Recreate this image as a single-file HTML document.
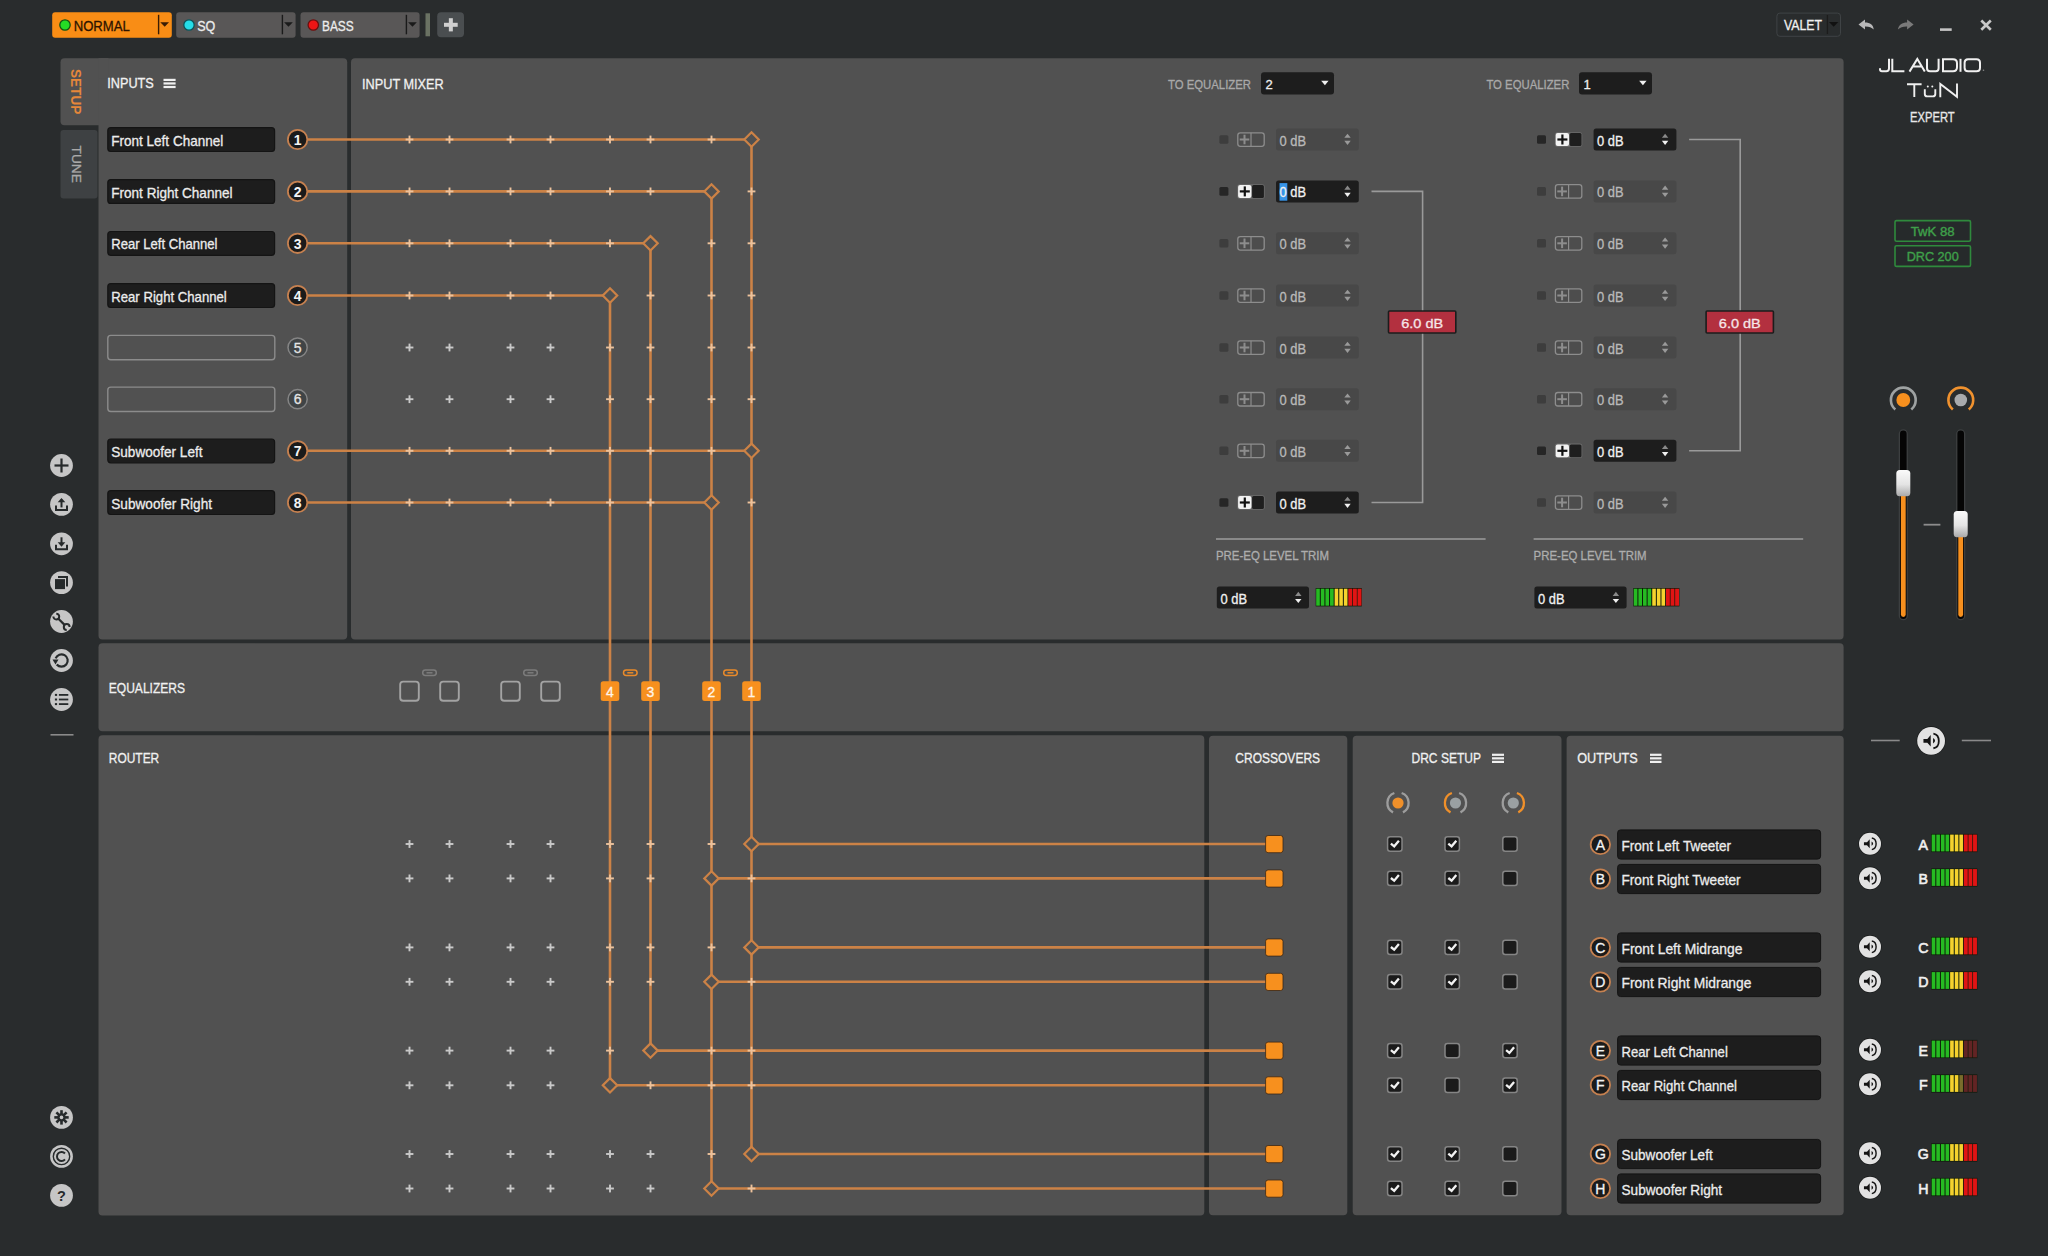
<!DOCTYPE html>
<html><head><meta charset="utf-8"><style>
html,body{margin:0;padding:0;background:#292c2d;overflow:hidden;width:2048px;height:1256px}
svg{display:block;font-family:"Liberation Sans", sans-serif}
</style></head><body>
<svg width="2048" height="1256" viewBox="0 0 2048 1256">
<rect x="0.00" y="0.00" width="2048.00" height="1256.00" fill="#292c2d"/>
<rect x="52.20" y="12.30" width="119.60" height="25.40" fill="#f98d15" rx="3"/>
<circle cx="65.00" cy="25.00" r="5.20" fill="#25dd25" stroke="#145214" stroke-width="1.3"/>
<text x="73.70" y="31.00" font-size="14.6" fill="#2e1400" stroke="#2e1400" stroke-width="0.3" textLength="56.10" lengthAdjust="spacingAndGlyphs">NORMAL</text>
<line x1="158.60" y1="14.80" x2="158.60" y2="34.30" stroke="#3a1d05" stroke-width="1.4"/>
<path d="M160.3,22.3 L169.0,22.3 L164.7,26.8 Z" fill="#3a1d05"/>
<rect x="176.20" y="12.30" width="119.40" height="25.40" fill="#595757" rx="3"/>
<circle cx="189.00" cy="25.00" r="5.20" fill="#25dde8" stroke="#0c5258" stroke-width="1.3"/>
<text x="197.20" y="31.00" font-size="14.6" fill="#ececec" stroke="#ececec" stroke-width="0.3" textLength="18.10" lengthAdjust="spacingAndGlyphs">SQ</text>
<line x1="282.40" y1="14.80" x2="282.40" y2="34.30" stroke="#1a1a1a" stroke-width="1.4"/>
<path d="M284.1,22.3 L292.8,22.3 L288.5,26.8 Z" fill="#1a1a1a"/>
<rect x="300.50" y="12.30" width="119.10" height="25.40" fill="#595757" rx="3"/>
<circle cx="313.30" cy="25.00" r="5.20" fill="#ee1515" stroke="#6a1010" stroke-width="1.3"/>
<text x="322.00" y="31.00" font-size="14.6" fill="#ececec" stroke="#ececec" stroke-width="0.3" textLength="31.70" lengthAdjust="spacingAndGlyphs">BASS</text>
<line x1="406.40" y1="14.80" x2="406.40" y2="34.30" stroke="#1a1a1a" stroke-width="1.4"/>
<path d="M408.1,22.3 L416.8,22.3 L412.5,26.8 Z" fill="#1a1a1a"/>
<rect x="425.50" y="13.30" width="4.50" height="23.00" fill="#6a7263"/>
<rect x="437.20" y="12.30" width="26.80" height="25.00" fill="#4a4e50" rx="4"/>
<rect x="444.00" y="22.80" width="13.70" height="4.00" fill="#d0d0d0"/>
<rect x="448.85" y="18.20" width="4.00" height="13.20" fill="#d0d0d0"/>
<rect x="1776.90" y="13.10" width="63.60" height="23.20" fill="none" rx="3" stroke="#3f4345" stroke-width="1"/>
<text x="1784.00" y="30.30" font-size="14" fill="#f0f0f0" stroke="#f0f0f0" stroke-width="0.3" textLength="38.00" lengthAdjust="spacingAndGlyphs">VALET</text>
<line x1="1827.40" y1="15.00" x2="1827.40" y2="34.00" stroke="#1c1c1c" stroke-width="1.3"/>
<path d="M1829,22 L1838.3,22 L1833.65,26.8 Z" fill="#111"/>
<path d="M1858.5,24.5 L1865,19.6 L1865,22.4 C1870,22.4 1873.5,24.5 1873.7,29.6 C1871.5,27.2 1869,26.3 1865,26.4 L1865,29.4 Z" fill="#b9b9b9"/>
<path d="M1913.6,24.5 L1907.1,19.6 L1907.1,22.4 C1902.1,22.4 1898.6,24.5 1897.9,29.6 C1900.1,27.2 1903.1,26.3 1907.1,26.4 L1907.1,29.4 Z" fill="#7a7a7a"/>
<rect x="1940.00" y="28.30" width="11.70" height="2.60" fill="#c4c4c4"/>
<line x1="1981.30" y1="20.50" x2="1990.80" y2="29.80" stroke="#c8c8c8" stroke-width="2.6"/>
<line x1="1990.80" y1="20.50" x2="1981.30" y2="29.80" stroke="#c8c8c8" stroke-width="2.6"/>
<path d="M1889,58.8 L1889,68.5 Q1889,71.2 1886.3,71.2 L1882,71.2 Q1880,71.2 1880,69.2 L1880,68.2" fill="none" stroke="#f0f0f0" stroke-width="2.0"/>
<path d="M1892.3,58.8 L1892.3,71.2 L1904.4,71.2" fill="none" stroke="#f0f0f0" stroke-width="2.0"/>
<path d="M1909.5,71.6 L1917.3,59 L1924.8,71.6 M1913.2,66.6 L1921.6,66.6" fill="none" stroke="#f0f0f0" stroke-width="2.0"/>
<path d="M1927,58.8 L1927,68.2 Q1927,71.2 1930,71.2 L1935.8,71.2 Q1938.6,71.2 1938.6,68.2 L1938.6,58.8" fill="none" stroke="#f0f0f0" stroke-width="2.0"/>
<path d="M1943,59.3 L1953,59.3 Q1957,59.3 1957,63.3 L1957,67.2 Q1957,71.2 1953,71.2 L1943,71.2 Z" fill="none" stroke="#f0f0f0" stroke-width="2.0"/>
<path d="M1960.5,58.8 L1960.5,71.8" fill="none" stroke="#f0f0f0" stroke-width="2.0"/>
<path d="M1968,59.3 L1976.5,59.3 Q1980,59.3 1980,62.8 L1980,67.7 Q1980,71.2 1976.5,71.2 L1968,71.2 Q1964.6,71.2 1964.6,67.7 L1964.6,62.8 Q1964.6,59.3 1968,59.3 Z" fill="none" stroke="#f0f0f0" stroke-width="2.0"/>
<circle cx="1983.50" cy="70.30" r="0.80" fill="#888"/>
<path d="M1907,84.2 L1921.6,84.2 M1914.3,84.2 L1914.3,97" fill="none" stroke="#f0f0f0" stroke-width="1.9"/>
<path d="M1924.8,89.3 L1924.8,94 Q1924.8,96.4 1927.2,96.4 L1932.8,96.4 Q1935.3,96.4 1935.3,94 L1935.3,89.3" fill="none" stroke="#f0f0f0" stroke-width="1.9"/>
<circle cx="1927.80" cy="86.60" r="1.00" fill="#f0f0f0"/>
<circle cx="1932.30" cy="86.60" r="1.00" fill="#f0f0f0"/>
<path d="M1940.3,97.2 L1940.3,84 L1957,96.8 L1957,83.6" fill="none" stroke="#f0f0f0" stroke-width="1.9"/>
<text x="1910.10" y="122.30" font-size="14.2" fill="#e8e8e8" stroke="#e8e8e8" stroke-width="0.3" textLength="44.60" lengthAdjust="spacingAndGlyphs">EXPERT</text>
<rect x="60.50" y="58.30" width="49.50" height="66.90" fill="#515151" rx="4"/>
<rect x="60.50" y="130.00" width="37.00" height="68.40" fill="#3e4143" rx="3"/>
<rect x="98.50" y="58.20" width="248.70" height="581.30" fill="#515151" rx="4"/>
<rect x="98.50" y="58.20" width="10.00" height="20.00" fill="#515151"/>
<rect x="351.00" y="58.20" width="1492.60" height="581.30" fill="#515151" rx="4"/>
<rect x="98.50" y="643.30" width="1745.10" height="87.90" fill="#515151" rx="4"/>
<rect x="98.50" y="735.20" width="1105.80" height="480.30" fill="#515151" rx="4"/>
<rect x="1209.00" y="735.80" width="138.30" height="479.50" fill="#515151" rx="4"/>
<rect x="1352.70" y="735.80" width="208.80" height="479.50" fill="#515151" rx="4"/>
<rect x="1566.60" y="735.80" width="277.10" height="479.50" fill="#515151" rx="4"/>
<text x="0" y="0" font-size="14.5" fill="#e5873a" font-weight="bold" textLength="45.3" lengthAdjust="spacingAndGlyphs" transform="translate(71.4,69) rotate(90)">SETUP</text>
<text x="0" y="0" font-size="13" fill="#a9a9a9" stroke="#a9a9a9" stroke-width="0.3" textLength="37.5" lengthAdjust="spacingAndGlyphs" transform="translate(72.3,145.5) rotate(90)">TUNE</text>
<text x="107.25" y="87.90" font-size="14.5" fill="#f2f2f2" stroke="#f2f2f2" stroke-width="0.3" textLength="46.50" lengthAdjust="spacingAndGlyphs">INPUTS</text>
<rect x="163.50" y="78.80" width="12.10" height="2.20" fill="#f0f0f0"/>
<rect x="163.50" y="82.35" width="12.10" height="2.20" fill="#f0f0f0"/>
<rect x="163.50" y="85.90" width="12.10" height="2.20" fill="#f0f0f0"/>
<rect x="107.80" y="127.70" width="166.80" height="23.80" fill="#1d1d1d" rx="3" stroke="#141414" stroke-width="1.2"/>
<text x="111.25" y="145.60" font-size="14.3" fill="#ececec" stroke="#ececec" stroke-width="0.3" textLength="112.00" lengthAdjust="spacingAndGlyphs">Front Left Channel</text>
<rect x="107.80" y="179.60" width="166.80" height="23.80" fill="#1d1d1d" rx="3" stroke="#141414" stroke-width="1.2"/>
<text x="111.25" y="197.50" font-size="14.3" fill="#ececec" stroke="#ececec" stroke-width="0.3" textLength="121.25" lengthAdjust="spacingAndGlyphs">Front Right Channel</text>
<rect x="107.80" y="231.50" width="166.80" height="23.80" fill="#1d1d1d" rx="3" stroke="#141414" stroke-width="1.2"/>
<text x="111.25" y="249.40" font-size="14.3" fill="#ececec" stroke="#ececec" stroke-width="0.3" textLength="106.25" lengthAdjust="spacingAndGlyphs">Rear Left Channel</text>
<rect x="107.80" y="283.70" width="166.80" height="23.80" fill="#1d1d1d" rx="3" stroke="#141414" stroke-width="1.2"/>
<text x="111.25" y="301.60" font-size="14.3" fill="#ececec" stroke="#ececec" stroke-width="0.3" textLength="115.50" lengthAdjust="spacingAndGlyphs">Rear Right Channel</text>
<rect x="107.80" y="335.40" width="167.00" height="24.40" fill="#515151" rx="3" stroke="#8c8c8c" stroke-width="1.4"/>
<rect x="107.80" y="387.10" width="167.00" height="24.40" fill="#515151" rx="3" stroke="#8c8c8c" stroke-width="1.4"/>
<rect x="107.80" y="439.00" width="166.80" height="23.80" fill="#1d1d1d" rx="3" stroke="#141414" stroke-width="1.2"/>
<text x="111.25" y="456.90" font-size="14.3" fill="#ececec" stroke="#ececec" stroke-width="0.3" textLength="91.25" lengthAdjust="spacingAndGlyphs">Subwoofer Left</text>
<rect x="107.80" y="490.70" width="166.80" height="23.80" fill="#1d1d1d" rx="3" stroke="#141414" stroke-width="1.2"/>
<text x="111.25" y="508.60" font-size="14.3" fill="#ececec" stroke="#ececec" stroke-width="0.3" textLength="100.75" lengthAdjust="spacingAndGlyphs">Subwoofer Right</text>
<line x1="751.50" y1="139.50" x2="751.50" y2="1154.00" stroke="#cc8246" stroke-width="2.6"/>
<line x1="711.50" y1="191.40" x2="711.50" y2="1188.50" stroke="#cc8246" stroke-width="2.6"/>
<line x1="650.50" y1="243.30" x2="650.50" y2="1050.60" stroke="#cc8246" stroke-width="2.6"/>
<line x1="610.00" y1="295.50" x2="610.00" y2="1085.30" stroke="#cc8246" stroke-width="2.6"/>
<line x1="308.00" y1="139.50" x2="751.50" y2="139.50" stroke="#cc8246" stroke-width="2.6"/>
<line x1="308.00" y1="191.40" x2="711.50" y2="191.40" stroke="#cc8246" stroke-width="2.6"/>
<line x1="308.00" y1="243.30" x2="650.50" y2="243.30" stroke="#cc8246" stroke-width="2.6"/>
<line x1="308.00" y1="295.50" x2="610.00" y2="295.50" stroke="#cc8246" stroke-width="2.6"/>
<line x1="308.00" y1="450.80" x2="751.50" y2="450.80" stroke="#cc8246" stroke-width="2.6"/>
<line x1="308.00" y1="502.50" x2="711.50" y2="502.50" stroke="#cc8246" stroke-width="2.6"/>
<line x1="751.50" y1="844.00" x2="1274.30" y2="844.00" stroke="#cc8246" stroke-width="2.6"/>
<line x1="711.50" y1="878.40" x2="1274.30" y2="878.40" stroke="#cc8246" stroke-width="2.6"/>
<line x1="751.50" y1="947.40" x2="1274.30" y2="947.40" stroke="#cc8246" stroke-width="2.6"/>
<line x1="711.50" y1="981.80" x2="1274.30" y2="981.80" stroke="#cc8246" stroke-width="2.6"/>
<line x1="650.50" y1="1050.60" x2="1274.30" y2="1050.60" stroke="#cc8246" stroke-width="2.6"/>
<line x1="610.00" y1="1085.30" x2="1274.30" y2="1085.30" stroke="#cc8246" stroke-width="2.6"/>
<line x1="751.50" y1="1154.00" x2="1274.30" y2="1154.00" stroke="#cc8246" stroke-width="2.6"/>
<line x1="711.50" y1="1188.50" x2="1274.30" y2="1188.50" stroke="#cc8246" stroke-width="2.6"/>
<rect x="405.60" y="138.55" width="7.80" height="1.90" fill="#ecc29c"/>
<rect x="408.55" y="135.60" width="1.90" height="7.80" fill="#ecc29c"/>
<rect x="445.60" y="138.55" width="7.80" height="1.90" fill="#ecc29c"/>
<rect x="448.55" y="135.60" width="1.90" height="7.80" fill="#ecc29c"/>
<rect x="506.60" y="138.55" width="7.80" height="1.90" fill="#ecc29c"/>
<rect x="509.55" y="135.60" width="1.90" height="7.80" fill="#ecc29c"/>
<rect x="546.60" y="138.55" width="7.80" height="1.90" fill="#ecc29c"/>
<rect x="549.55" y="135.60" width="1.90" height="7.80" fill="#ecc29c"/>
<rect x="606.10" y="138.55" width="7.80" height="1.90" fill="#ecc29c"/>
<rect x="609.05" y="135.60" width="1.90" height="7.80" fill="#ecc29c"/>
<rect x="646.60" y="138.55" width="7.80" height="1.90" fill="#ecc29c"/>
<rect x="649.55" y="135.60" width="1.90" height="7.80" fill="#ecc29c"/>
<rect x="707.60" y="138.55" width="7.80" height="1.90" fill="#ecc29c"/>
<rect x="710.55" y="135.60" width="1.90" height="7.80" fill="#ecc29c"/>
<path d="M751.5,132.3 L758.7,139.5 L751.5,146.7 L744.3,139.5 Z" fill="#515151" stroke="#cc8246" stroke-width="2.2"/>
<rect x="405.60" y="190.45" width="7.80" height="1.90" fill="#ecc29c"/>
<rect x="408.55" y="187.50" width="1.90" height="7.80" fill="#ecc29c"/>
<rect x="445.60" y="190.45" width="7.80" height="1.90" fill="#ecc29c"/>
<rect x="448.55" y="187.50" width="1.90" height="7.80" fill="#ecc29c"/>
<rect x="506.60" y="190.45" width="7.80" height="1.90" fill="#ecc29c"/>
<rect x="509.55" y="187.50" width="1.90" height="7.80" fill="#ecc29c"/>
<rect x="546.60" y="190.45" width="7.80" height="1.90" fill="#ecc29c"/>
<rect x="549.55" y="187.50" width="1.90" height="7.80" fill="#ecc29c"/>
<rect x="606.10" y="190.45" width="7.80" height="1.90" fill="#ecc29c"/>
<rect x="609.05" y="187.50" width="1.90" height="7.80" fill="#ecc29c"/>
<rect x="646.60" y="190.45" width="7.80" height="1.90" fill="#ecc29c"/>
<rect x="649.55" y="187.50" width="1.90" height="7.80" fill="#ecc29c"/>
<path d="M711.5,184.20000000000002 L718.7,191.4 L711.5,198.6 L704.3,191.4 Z" fill="#515151" stroke="#cc8246" stroke-width="2.2"/>
<rect x="747.60" y="190.45" width="7.80" height="1.90" fill="#ecc29c"/>
<rect x="750.55" y="187.50" width="1.90" height="7.80" fill="#ecc29c"/>
<rect x="405.60" y="242.35" width="7.80" height="1.90" fill="#ecc29c"/>
<rect x="408.55" y="239.40" width="1.90" height="7.80" fill="#ecc29c"/>
<rect x="445.60" y="242.35" width="7.80" height="1.90" fill="#ecc29c"/>
<rect x="448.55" y="239.40" width="1.90" height="7.80" fill="#ecc29c"/>
<rect x="506.60" y="242.35" width="7.80" height="1.90" fill="#ecc29c"/>
<rect x="509.55" y="239.40" width="1.90" height="7.80" fill="#ecc29c"/>
<rect x="546.60" y="242.35" width="7.80" height="1.90" fill="#ecc29c"/>
<rect x="549.55" y="239.40" width="1.90" height="7.80" fill="#ecc29c"/>
<rect x="606.10" y="242.35" width="7.80" height="1.90" fill="#ecc29c"/>
<rect x="609.05" y="239.40" width="1.90" height="7.80" fill="#ecc29c"/>
<path d="M650.5,236.10000000000002 L657.7,243.3 L650.5,250.5 L643.3,243.3 Z" fill="#515151" stroke="#cc8246" stroke-width="2.2"/>
<rect x="707.60" y="242.35" width="7.80" height="1.90" fill="#ecc29c"/>
<rect x="710.55" y="239.40" width="1.90" height="7.80" fill="#ecc29c"/>
<rect x="747.60" y="242.35" width="7.80" height="1.90" fill="#ecc29c"/>
<rect x="750.55" y="239.40" width="1.90" height="7.80" fill="#ecc29c"/>
<rect x="405.60" y="294.55" width="7.80" height="1.90" fill="#ecc29c"/>
<rect x="408.55" y="291.60" width="1.90" height="7.80" fill="#ecc29c"/>
<rect x="445.60" y="294.55" width="7.80" height="1.90" fill="#ecc29c"/>
<rect x="448.55" y="291.60" width="1.90" height="7.80" fill="#ecc29c"/>
<rect x="506.60" y="294.55" width="7.80" height="1.90" fill="#ecc29c"/>
<rect x="509.55" y="291.60" width="1.90" height="7.80" fill="#ecc29c"/>
<rect x="546.60" y="294.55" width="7.80" height="1.90" fill="#ecc29c"/>
<rect x="549.55" y="291.60" width="1.90" height="7.80" fill="#ecc29c"/>
<path d="M610,288.3 L617.2,295.5 L610,302.7 L602.8,295.5 Z" fill="#515151" stroke="#cc8246" stroke-width="2.2"/>
<rect x="646.60" y="294.55" width="7.80" height="1.90" fill="#ecc29c"/>
<rect x="649.55" y="291.60" width="1.90" height="7.80" fill="#ecc29c"/>
<rect x="707.60" y="294.55" width="7.80" height="1.90" fill="#ecc29c"/>
<rect x="710.55" y="291.60" width="1.90" height="7.80" fill="#ecc29c"/>
<rect x="747.60" y="294.55" width="7.80" height="1.90" fill="#ecc29c"/>
<rect x="750.55" y="291.60" width="1.90" height="7.80" fill="#ecc29c"/>
<rect x="405.60" y="346.55" width="7.80" height="1.90" fill="#c9c9c9"/>
<rect x="408.55" y="343.60" width="1.90" height="7.80" fill="#c9c9c9"/>
<rect x="445.60" y="346.55" width="7.80" height="1.90" fill="#c9c9c9"/>
<rect x="448.55" y="343.60" width="1.90" height="7.80" fill="#c9c9c9"/>
<rect x="506.60" y="346.55" width="7.80" height="1.90" fill="#c9c9c9"/>
<rect x="509.55" y="343.60" width="1.90" height="7.80" fill="#c9c9c9"/>
<rect x="546.60" y="346.55" width="7.80" height="1.90" fill="#c9c9c9"/>
<rect x="549.55" y="343.60" width="1.90" height="7.80" fill="#c9c9c9"/>
<rect x="606.10" y="346.55" width="7.80" height="1.90" fill="#ecc29c"/>
<rect x="609.05" y="343.60" width="1.90" height="7.80" fill="#ecc29c"/>
<rect x="646.60" y="346.55" width="7.80" height="1.90" fill="#ecc29c"/>
<rect x="649.55" y="343.60" width="1.90" height="7.80" fill="#ecc29c"/>
<rect x="707.60" y="346.55" width="7.80" height="1.90" fill="#ecc29c"/>
<rect x="710.55" y="343.60" width="1.90" height="7.80" fill="#ecc29c"/>
<rect x="747.60" y="346.55" width="7.80" height="1.90" fill="#ecc29c"/>
<rect x="750.55" y="343.60" width="1.90" height="7.80" fill="#ecc29c"/>
<rect x="405.60" y="398.25" width="7.80" height="1.90" fill="#c9c9c9"/>
<rect x="408.55" y="395.30" width="1.90" height="7.80" fill="#c9c9c9"/>
<rect x="445.60" y="398.25" width="7.80" height="1.90" fill="#c9c9c9"/>
<rect x="448.55" y="395.30" width="1.90" height="7.80" fill="#c9c9c9"/>
<rect x="506.60" y="398.25" width="7.80" height="1.90" fill="#c9c9c9"/>
<rect x="509.55" y="395.30" width="1.90" height="7.80" fill="#c9c9c9"/>
<rect x="546.60" y="398.25" width="7.80" height="1.90" fill="#c9c9c9"/>
<rect x="549.55" y="395.30" width="1.90" height="7.80" fill="#c9c9c9"/>
<rect x="606.10" y="398.25" width="7.80" height="1.90" fill="#ecc29c"/>
<rect x="609.05" y="395.30" width="1.90" height="7.80" fill="#ecc29c"/>
<rect x="646.60" y="398.25" width="7.80" height="1.90" fill="#ecc29c"/>
<rect x="649.55" y="395.30" width="1.90" height="7.80" fill="#ecc29c"/>
<rect x="707.60" y="398.25" width="7.80" height="1.90" fill="#ecc29c"/>
<rect x="710.55" y="395.30" width="1.90" height="7.80" fill="#ecc29c"/>
<rect x="747.60" y="398.25" width="7.80" height="1.90" fill="#ecc29c"/>
<rect x="750.55" y="395.30" width="1.90" height="7.80" fill="#ecc29c"/>
<rect x="405.60" y="449.85" width="7.80" height="1.90" fill="#ecc29c"/>
<rect x="408.55" y="446.90" width="1.90" height="7.80" fill="#ecc29c"/>
<rect x="445.60" y="449.85" width="7.80" height="1.90" fill="#ecc29c"/>
<rect x="448.55" y="446.90" width="1.90" height="7.80" fill="#ecc29c"/>
<rect x="506.60" y="449.85" width="7.80" height="1.90" fill="#ecc29c"/>
<rect x="509.55" y="446.90" width="1.90" height="7.80" fill="#ecc29c"/>
<rect x="546.60" y="449.85" width="7.80" height="1.90" fill="#ecc29c"/>
<rect x="549.55" y="446.90" width="1.90" height="7.80" fill="#ecc29c"/>
<rect x="606.10" y="449.85" width="7.80" height="1.90" fill="#ecc29c"/>
<rect x="609.05" y="446.90" width="1.90" height="7.80" fill="#ecc29c"/>
<rect x="646.60" y="449.85" width="7.80" height="1.90" fill="#ecc29c"/>
<rect x="649.55" y="446.90" width="1.90" height="7.80" fill="#ecc29c"/>
<rect x="707.60" y="449.85" width="7.80" height="1.90" fill="#ecc29c"/>
<rect x="710.55" y="446.90" width="1.90" height="7.80" fill="#ecc29c"/>
<path d="M751.5,443.6 L758.7,450.8 L751.5,458.0 L744.3,450.8 Z" fill="#515151" stroke="#cc8246" stroke-width="2.2"/>
<rect x="405.60" y="501.55" width="7.80" height="1.90" fill="#ecc29c"/>
<rect x="408.55" y="498.60" width="1.90" height="7.80" fill="#ecc29c"/>
<rect x="445.60" y="501.55" width="7.80" height="1.90" fill="#ecc29c"/>
<rect x="448.55" y="498.60" width="1.90" height="7.80" fill="#ecc29c"/>
<rect x="506.60" y="501.55" width="7.80" height="1.90" fill="#ecc29c"/>
<rect x="509.55" y="498.60" width="1.90" height="7.80" fill="#ecc29c"/>
<rect x="546.60" y="501.55" width="7.80" height="1.90" fill="#ecc29c"/>
<rect x="549.55" y="498.60" width="1.90" height="7.80" fill="#ecc29c"/>
<rect x="606.10" y="501.55" width="7.80" height="1.90" fill="#ecc29c"/>
<rect x="609.05" y="498.60" width="1.90" height="7.80" fill="#ecc29c"/>
<rect x="646.60" y="501.55" width="7.80" height="1.90" fill="#ecc29c"/>
<rect x="649.55" y="498.60" width="1.90" height="7.80" fill="#ecc29c"/>
<path d="M711.5,495.3 L718.7,502.5 L711.5,509.7 L704.3,502.5 Z" fill="#515151" stroke="#cc8246" stroke-width="2.2"/>
<rect x="747.60" y="501.55" width="7.80" height="1.90" fill="#ecc29c"/>
<rect x="750.55" y="498.60" width="1.90" height="7.80" fill="#ecc29c"/>
<rect x="405.60" y="843.05" width="7.80" height="1.90" fill="#c9c9c9"/>
<rect x="408.55" y="840.10" width="1.90" height="7.80" fill="#c9c9c9"/>
<rect x="445.60" y="843.05" width="7.80" height="1.90" fill="#c9c9c9"/>
<rect x="448.55" y="840.10" width="1.90" height="7.80" fill="#c9c9c9"/>
<rect x="506.60" y="843.05" width="7.80" height="1.90" fill="#c9c9c9"/>
<rect x="509.55" y="840.10" width="1.90" height="7.80" fill="#c9c9c9"/>
<rect x="546.60" y="843.05" width="7.80" height="1.90" fill="#c9c9c9"/>
<rect x="549.55" y="840.10" width="1.90" height="7.80" fill="#c9c9c9"/>
<rect x="606.10" y="843.05" width="7.80" height="1.90" fill="#ecc29c"/>
<rect x="609.05" y="840.10" width="1.90" height="7.80" fill="#ecc29c"/>
<rect x="646.60" y="843.05" width="7.80" height="1.90" fill="#ecc29c"/>
<rect x="649.55" y="840.10" width="1.90" height="7.80" fill="#ecc29c"/>
<rect x="707.60" y="843.05" width="7.80" height="1.90" fill="#ecc29c"/>
<rect x="710.55" y="840.10" width="1.90" height="7.80" fill="#ecc29c"/>
<path d="M751.5,836.8 L758.7,844 L751.5,851.2 L744.3,844 Z" fill="#515151" stroke="#cc8246" stroke-width="2.2"/>
<rect x="405.60" y="877.45" width="7.80" height="1.90" fill="#c9c9c9"/>
<rect x="408.55" y="874.50" width="1.90" height="7.80" fill="#c9c9c9"/>
<rect x="445.60" y="877.45" width="7.80" height="1.90" fill="#c9c9c9"/>
<rect x="448.55" y="874.50" width="1.90" height="7.80" fill="#c9c9c9"/>
<rect x="506.60" y="877.45" width="7.80" height="1.90" fill="#c9c9c9"/>
<rect x="509.55" y="874.50" width="1.90" height="7.80" fill="#c9c9c9"/>
<rect x="546.60" y="877.45" width="7.80" height="1.90" fill="#c9c9c9"/>
<rect x="549.55" y="874.50" width="1.90" height="7.80" fill="#c9c9c9"/>
<rect x="606.10" y="877.45" width="7.80" height="1.90" fill="#ecc29c"/>
<rect x="609.05" y="874.50" width="1.90" height="7.80" fill="#ecc29c"/>
<rect x="646.60" y="877.45" width="7.80" height="1.90" fill="#ecc29c"/>
<rect x="649.55" y="874.50" width="1.90" height="7.80" fill="#ecc29c"/>
<path d="M711.5,871.1999999999999 L718.7,878.4 L711.5,885.6 L704.3,878.4 Z" fill="#515151" stroke="#cc8246" stroke-width="2.2"/>
<rect x="747.60" y="877.45" width="7.80" height="1.90" fill="#ecc29c"/>
<rect x="750.55" y="874.50" width="1.90" height="7.80" fill="#ecc29c"/>
<rect x="405.60" y="946.45" width="7.80" height="1.90" fill="#c9c9c9"/>
<rect x="408.55" y="943.50" width="1.90" height="7.80" fill="#c9c9c9"/>
<rect x="445.60" y="946.45" width="7.80" height="1.90" fill="#c9c9c9"/>
<rect x="448.55" y="943.50" width="1.90" height="7.80" fill="#c9c9c9"/>
<rect x="506.60" y="946.45" width="7.80" height="1.90" fill="#c9c9c9"/>
<rect x="509.55" y="943.50" width="1.90" height="7.80" fill="#c9c9c9"/>
<rect x="546.60" y="946.45" width="7.80" height="1.90" fill="#c9c9c9"/>
<rect x="549.55" y="943.50" width="1.90" height="7.80" fill="#c9c9c9"/>
<rect x="606.10" y="946.45" width="7.80" height="1.90" fill="#ecc29c"/>
<rect x="609.05" y="943.50" width="1.90" height="7.80" fill="#ecc29c"/>
<rect x="646.60" y="946.45" width="7.80" height="1.90" fill="#ecc29c"/>
<rect x="649.55" y="943.50" width="1.90" height="7.80" fill="#ecc29c"/>
<rect x="707.60" y="946.45" width="7.80" height="1.90" fill="#ecc29c"/>
<rect x="710.55" y="943.50" width="1.90" height="7.80" fill="#ecc29c"/>
<path d="M751.5,940.1999999999999 L758.7,947.4 L751.5,954.6 L744.3,947.4 Z" fill="#515151" stroke="#cc8246" stroke-width="2.2"/>
<rect x="405.60" y="980.85" width="7.80" height="1.90" fill="#c9c9c9"/>
<rect x="408.55" y="977.90" width="1.90" height="7.80" fill="#c9c9c9"/>
<rect x="445.60" y="980.85" width="7.80" height="1.90" fill="#c9c9c9"/>
<rect x="448.55" y="977.90" width="1.90" height="7.80" fill="#c9c9c9"/>
<rect x="506.60" y="980.85" width="7.80" height="1.90" fill="#c9c9c9"/>
<rect x="509.55" y="977.90" width="1.90" height="7.80" fill="#c9c9c9"/>
<rect x="546.60" y="980.85" width="7.80" height="1.90" fill="#c9c9c9"/>
<rect x="549.55" y="977.90" width="1.90" height="7.80" fill="#c9c9c9"/>
<rect x="606.10" y="980.85" width="7.80" height="1.90" fill="#ecc29c"/>
<rect x="609.05" y="977.90" width="1.90" height="7.80" fill="#ecc29c"/>
<rect x="646.60" y="980.85" width="7.80" height="1.90" fill="#ecc29c"/>
<rect x="649.55" y="977.90" width="1.90" height="7.80" fill="#ecc29c"/>
<path d="M711.5,974.5999999999999 L718.7,981.8 L711.5,989.0 L704.3,981.8 Z" fill="#515151" stroke="#cc8246" stroke-width="2.2"/>
<rect x="747.60" y="980.85" width="7.80" height="1.90" fill="#ecc29c"/>
<rect x="750.55" y="977.90" width="1.90" height="7.80" fill="#ecc29c"/>
<rect x="405.60" y="1049.65" width="7.80" height="1.90" fill="#c9c9c9"/>
<rect x="408.55" y="1046.70" width="1.90" height="7.80" fill="#c9c9c9"/>
<rect x="445.60" y="1049.65" width="7.80" height="1.90" fill="#c9c9c9"/>
<rect x="448.55" y="1046.70" width="1.90" height="7.80" fill="#c9c9c9"/>
<rect x="506.60" y="1049.65" width="7.80" height="1.90" fill="#c9c9c9"/>
<rect x="509.55" y="1046.70" width="1.90" height="7.80" fill="#c9c9c9"/>
<rect x="546.60" y="1049.65" width="7.80" height="1.90" fill="#c9c9c9"/>
<rect x="549.55" y="1046.70" width="1.90" height="7.80" fill="#c9c9c9"/>
<rect x="606.10" y="1049.65" width="7.80" height="1.90" fill="#ecc29c"/>
<rect x="609.05" y="1046.70" width="1.90" height="7.80" fill="#ecc29c"/>
<path d="M650.5,1043.3999999999999 L657.7,1050.6 L650.5,1057.8 L643.3,1050.6 Z" fill="#515151" stroke="#cc8246" stroke-width="2.2"/>
<rect x="707.60" y="1049.65" width="7.80" height="1.90" fill="#ecc29c"/>
<rect x="710.55" y="1046.70" width="1.90" height="7.80" fill="#ecc29c"/>
<rect x="747.60" y="1049.65" width="7.80" height="1.90" fill="#ecc29c"/>
<rect x="750.55" y="1046.70" width="1.90" height="7.80" fill="#ecc29c"/>
<rect x="405.60" y="1084.35" width="7.80" height="1.90" fill="#c9c9c9"/>
<rect x="408.55" y="1081.40" width="1.90" height="7.80" fill="#c9c9c9"/>
<rect x="445.60" y="1084.35" width="7.80" height="1.90" fill="#c9c9c9"/>
<rect x="448.55" y="1081.40" width="1.90" height="7.80" fill="#c9c9c9"/>
<rect x="506.60" y="1084.35" width="7.80" height="1.90" fill="#c9c9c9"/>
<rect x="509.55" y="1081.40" width="1.90" height="7.80" fill="#c9c9c9"/>
<rect x="546.60" y="1084.35" width="7.80" height="1.90" fill="#c9c9c9"/>
<rect x="549.55" y="1081.40" width="1.90" height="7.80" fill="#c9c9c9"/>
<path d="M610,1078.1 L617.2,1085.3 L610,1092.5 L602.8,1085.3 Z" fill="#515151" stroke="#cc8246" stroke-width="2.2"/>
<rect x="646.60" y="1084.35" width="7.80" height="1.90" fill="#ecc29c"/>
<rect x="649.55" y="1081.40" width="1.90" height="7.80" fill="#ecc29c"/>
<rect x="707.60" y="1084.35" width="7.80" height="1.90" fill="#ecc29c"/>
<rect x="710.55" y="1081.40" width="1.90" height="7.80" fill="#ecc29c"/>
<rect x="747.60" y="1084.35" width="7.80" height="1.90" fill="#ecc29c"/>
<rect x="750.55" y="1081.40" width="1.90" height="7.80" fill="#ecc29c"/>
<rect x="405.60" y="1153.05" width="7.80" height="1.90" fill="#c9c9c9"/>
<rect x="408.55" y="1150.10" width="1.90" height="7.80" fill="#c9c9c9"/>
<rect x="445.60" y="1153.05" width="7.80" height="1.90" fill="#c9c9c9"/>
<rect x="448.55" y="1150.10" width="1.90" height="7.80" fill="#c9c9c9"/>
<rect x="506.60" y="1153.05" width="7.80" height="1.90" fill="#c9c9c9"/>
<rect x="509.55" y="1150.10" width="1.90" height="7.80" fill="#c9c9c9"/>
<rect x="546.60" y="1153.05" width="7.80" height="1.90" fill="#c9c9c9"/>
<rect x="549.55" y="1150.10" width="1.90" height="7.80" fill="#c9c9c9"/>
<rect x="606.10" y="1153.05" width="7.80" height="1.90" fill="#c9c9c9"/>
<rect x="609.05" y="1150.10" width="1.90" height="7.80" fill="#c9c9c9"/>
<rect x="646.60" y="1153.05" width="7.80" height="1.90" fill="#c9c9c9"/>
<rect x="649.55" y="1150.10" width="1.90" height="7.80" fill="#c9c9c9"/>
<rect x="707.60" y="1153.05" width="7.80" height="1.90" fill="#ecc29c"/>
<rect x="710.55" y="1150.10" width="1.90" height="7.80" fill="#ecc29c"/>
<path d="M751.5,1146.8 L758.7,1154 L751.5,1161.2 L744.3,1154 Z" fill="#515151" stroke="#cc8246" stroke-width="2.2"/>
<rect x="405.60" y="1187.55" width="7.80" height="1.90" fill="#c9c9c9"/>
<rect x="408.55" y="1184.60" width="1.90" height="7.80" fill="#c9c9c9"/>
<rect x="445.60" y="1187.55" width="7.80" height="1.90" fill="#c9c9c9"/>
<rect x="448.55" y="1184.60" width="1.90" height="7.80" fill="#c9c9c9"/>
<rect x="506.60" y="1187.55" width="7.80" height="1.90" fill="#c9c9c9"/>
<rect x="509.55" y="1184.60" width="1.90" height="7.80" fill="#c9c9c9"/>
<rect x="546.60" y="1187.55" width="7.80" height="1.90" fill="#c9c9c9"/>
<rect x="549.55" y="1184.60" width="1.90" height="7.80" fill="#c9c9c9"/>
<rect x="606.10" y="1187.55" width="7.80" height="1.90" fill="#c9c9c9"/>
<rect x="609.05" y="1184.60" width="1.90" height="7.80" fill="#c9c9c9"/>
<rect x="646.60" y="1187.55" width="7.80" height="1.90" fill="#c9c9c9"/>
<rect x="649.55" y="1184.60" width="1.90" height="7.80" fill="#c9c9c9"/>
<path d="M711.5,1181.3 L718.7,1188.5 L711.5,1195.7 L704.3,1188.5 Z" fill="#515151" stroke="#cc8246" stroke-width="2.2"/>
<rect x="747.60" y="1187.55" width="7.80" height="1.90" fill="#ecc29c"/>
<rect x="750.55" y="1184.60" width="1.90" height="7.80" fill="#ecc29c"/>
<circle cx="297.60" cy="139.50" r="9.70" fill="#1b1b1b" stroke="#c68150" stroke-width="1.8"/>
<text x="297.70" y="144.70" font-size="14" fill="#f4f4f4" text-anchor="middle" font-weight="bold">1</text>
<circle cx="297.60" cy="191.40" r="9.70" fill="#1b1b1b" stroke="#c68150" stroke-width="1.8"/>
<text x="297.70" y="196.60" font-size="14" fill="#f4f4f4" text-anchor="middle" font-weight="bold">2</text>
<circle cx="297.60" cy="243.30" r="9.70" fill="#1b1b1b" stroke="#c68150" stroke-width="1.8"/>
<text x="297.70" y="248.50" font-size="14" fill="#f4f4f4" text-anchor="middle" font-weight="bold">3</text>
<circle cx="297.60" cy="295.50" r="9.70" fill="#1b1b1b" stroke="#c68150" stroke-width="1.8"/>
<text x="297.70" y="300.70" font-size="14" fill="#f4f4f4" text-anchor="middle" font-weight="bold">4</text>
<circle cx="297.60" cy="347.50" r="9.60" fill="#404446" stroke="#858585" stroke-width="1.5"/>
<text x="297.60" y="352.70" font-size="14" fill="#e4e4e4" stroke="#e4e4e4" stroke-width="0.3" text-anchor="middle">5</text>
<circle cx="297.60" cy="399.20" r="9.60" fill="#404446" stroke="#858585" stroke-width="1.5"/>
<text x="297.60" y="404.40" font-size="14" fill="#e4e4e4" stroke="#e4e4e4" stroke-width="0.3" text-anchor="middle">6</text>
<circle cx="297.60" cy="450.80" r="9.70" fill="#1b1b1b" stroke="#c68150" stroke-width="1.8"/>
<text x="297.70" y="456.00" font-size="14" fill="#f4f4f4" text-anchor="middle" font-weight="bold">7</text>
<circle cx="297.60" cy="502.50" r="9.70" fill="#1b1b1b" stroke="#c68150" stroke-width="1.8"/>
<text x="297.70" y="507.70" font-size="14" fill="#f4f4f4" text-anchor="middle" font-weight="bold">8</text>
<text x="362.00" y="89.00" font-size="14.8" fill="#f0f0f0" stroke="#f0f0f0" stroke-width="0.3" textLength="81.80" lengthAdjust="spacingAndGlyphs">INPUT MIXER</text>
<text x="1168.00" y="89.40" font-size="13.1" fill="#a9a9a9" stroke="#a9a9a9" stroke-width="0.3" textLength="83.00" lengthAdjust="spacingAndGlyphs">TO EQUALIZER</text>
<rect x="1261.00" y="72.30" width="73.00" height="22.20" fill="#1d1d1d" rx="3"/>
<text x="1265.50" y="89.00" font-size="13" fill="#f0f0f0" stroke="#f0f0f0" stroke-width="0.3">2</text>
<path d="M1321.2,80.7 L1328.6,80.7 L1324.9,85.2 Z" fill="#f0f0f0"/>
<rect x="1219.40" y="135.20" width="9.00" height="8.60" fill="#3d3d3d" rx="1.5"/>
<rect x="1237.80" y="132.80" width="26.40" height="13.50" fill="#4d4d4d" rx="2.5" stroke="#8d8d8d" stroke-width="1.3"/>
<line x1="1251.00" y1="132.80" x2="1251.00" y2="146.30" stroke="#8d8d8d" stroke-width="1.2"/>
<rect x="1239.70" y="138.50" width="9.60" height="2.00" fill="#8d8d8d"/>
<rect x="1243.50" y="134.70" width="2.00" height="9.60" fill="#8d8d8d"/>
<rect x="1276.00" y="128.50" width="82.80" height="22.00" fill="#484848" rx="2.5"/>
<text x="1279.50" y="145.50" font-size="14.2" fill="#b9b9b9" stroke="#b9b9b9" stroke-width="0.3" textLength="26.50" lengthAdjust="spacingAndGlyphs">0 dB</text>
<path d="M1344.3,137.8 L1350.7,137.8 L1347.5,133.7 Z" fill="#9a9a9a"/>
<path d="M1344.3,140.8 L1350.7,140.8 L1347.5,145.0 Z" fill="#9a9a9a"/>
<rect x="1219.40" y="187.10" width="9.00" height="8.60" fill="#262626" rx="1.5"/>
<rect x="1237.30" y="184.20" width="27.40" height="14.50" fill="#6c6c6c" rx="2.5"/>
<rect x="1238.10" y="185.00" width="13.30" height="12.90" fill="#f2f2f2" rx="2"/>
<rect x="1252.10" y="185.00" width="11.80" height="12.90" fill="#1e1e1e" rx="1.5"/>
<rect x="1239.80" y="190.30" width="10.00" height="2.20" fill="#111"/>
<rect x="1243.70" y="186.40" width="2.20" height="10.00" fill="#111"/>
<rect x="1276.00" y="180.40" width="82.80" height="22.00" fill="#1d1d1d" rx="2.5"/>
<rect x="1279.50" y="183.10" width="7.80" height="17.60" fill="#3794e8"/>
<text x="1279.50" y="197.40" font-size="14.2" fill="#f0f0f0" stroke="#f0f0f0" stroke-width="0.3" textLength="26.50" lengthAdjust="spacingAndGlyphs">0 dB</text>
<path d="M1344.3,189.70000000000002 L1350.7,189.70000000000002 L1347.5,185.6 Z" fill="#8a8a8a"/>
<path d="M1344.3,192.70000000000002 L1350.7,192.70000000000002 L1347.5,196.9 Z" fill="#f0f0f0"/>
<rect x="1219.40" y="239.00" width="9.00" height="8.60" fill="#3d3d3d" rx="1.5"/>
<rect x="1237.80" y="236.60" width="26.40" height="13.50" fill="#4d4d4d" rx="2.5" stroke="#8d8d8d" stroke-width="1.3"/>
<line x1="1251.00" y1="236.60" x2="1251.00" y2="250.10" stroke="#8d8d8d" stroke-width="1.2"/>
<rect x="1239.70" y="242.30" width="9.60" height="2.00" fill="#8d8d8d"/>
<rect x="1243.50" y="238.50" width="2.00" height="9.60" fill="#8d8d8d"/>
<rect x="1276.00" y="232.30" width="82.80" height="22.00" fill="#484848" rx="2.5"/>
<text x="1279.50" y="249.30" font-size="14.2" fill="#b9b9b9" stroke="#b9b9b9" stroke-width="0.3" textLength="26.50" lengthAdjust="spacingAndGlyphs">0 dB</text>
<path d="M1344.3,241.60000000000002 L1350.7,241.60000000000002 L1347.5,237.5 Z" fill="#9a9a9a"/>
<path d="M1344.3,244.60000000000002 L1350.7,244.60000000000002 L1347.5,248.8 Z" fill="#9a9a9a"/>
<rect x="1219.40" y="291.20" width="9.00" height="8.60" fill="#3d3d3d" rx="1.5"/>
<rect x="1237.80" y="288.80" width="26.40" height="13.50" fill="#4d4d4d" rx="2.5" stroke="#8d8d8d" stroke-width="1.3"/>
<line x1="1251.00" y1="288.80" x2="1251.00" y2="302.30" stroke="#8d8d8d" stroke-width="1.2"/>
<rect x="1239.70" y="294.50" width="9.60" height="2.00" fill="#8d8d8d"/>
<rect x="1243.50" y="290.70" width="2.00" height="9.60" fill="#8d8d8d"/>
<rect x="1276.00" y="284.50" width="82.80" height="22.00" fill="#484848" rx="2.5"/>
<text x="1279.50" y="301.50" font-size="14.2" fill="#b9b9b9" stroke="#b9b9b9" stroke-width="0.3" textLength="26.50" lengthAdjust="spacingAndGlyphs">0 dB</text>
<path d="M1344.3,293.8 L1350.7,293.8 L1347.5,289.7 Z" fill="#9a9a9a"/>
<path d="M1344.3,296.8 L1350.7,296.8 L1347.5,301.0 Z" fill="#9a9a9a"/>
<rect x="1219.40" y="343.20" width="9.00" height="8.60" fill="#3d3d3d" rx="1.5"/>
<rect x="1237.80" y="340.80" width="26.40" height="13.50" fill="#4d4d4d" rx="2.5" stroke="#8d8d8d" stroke-width="1.3"/>
<line x1="1251.00" y1="340.80" x2="1251.00" y2="354.30" stroke="#8d8d8d" stroke-width="1.2"/>
<rect x="1239.70" y="346.50" width="9.60" height="2.00" fill="#8d8d8d"/>
<rect x="1243.50" y="342.70" width="2.00" height="9.60" fill="#8d8d8d"/>
<rect x="1276.00" y="336.50" width="82.80" height="22.00" fill="#484848" rx="2.5"/>
<text x="1279.50" y="353.50" font-size="14.2" fill="#b9b9b9" stroke="#b9b9b9" stroke-width="0.3" textLength="26.50" lengthAdjust="spacingAndGlyphs">0 dB</text>
<path d="M1344.3,345.8 L1350.7,345.8 L1347.5,341.7 Z" fill="#9a9a9a"/>
<path d="M1344.3,348.8 L1350.7,348.8 L1347.5,353.0 Z" fill="#9a9a9a"/>
<rect x="1219.40" y="394.90" width="9.00" height="8.60" fill="#3d3d3d" rx="1.5"/>
<rect x="1237.80" y="392.50" width="26.40" height="13.50" fill="#4d4d4d" rx="2.5" stroke="#8d8d8d" stroke-width="1.3"/>
<line x1="1251.00" y1="392.50" x2="1251.00" y2="406.00" stroke="#8d8d8d" stroke-width="1.2"/>
<rect x="1239.70" y="398.20" width="9.60" height="2.00" fill="#8d8d8d"/>
<rect x="1243.50" y="394.40" width="2.00" height="9.60" fill="#8d8d8d"/>
<rect x="1276.00" y="388.20" width="82.80" height="22.00" fill="#484848" rx="2.5"/>
<text x="1279.50" y="405.20" font-size="14.2" fill="#b9b9b9" stroke="#b9b9b9" stroke-width="0.3" textLength="26.50" lengthAdjust="spacingAndGlyphs">0 dB</text>
<path d="M1344.3,397.5 L1350.7,397.5 L1347.5,393.4 Z" fill="#9a9a9a"/>
<path d="M1344.3,400.5 L1350.7,400.5 L1347.5,404.7 Z" fill="#9a9a9a"/>
<rect x="1219.40" y="446.50" width="9.00" height="8.60" fill="#3d3d3d" rx="1.5"/>
<rect x="1237.80" y="444.10" width="26.40" height="13.50" fill="#4d4d4d" rx="2.5" stroke="#8d8d8d" stroke-width="1.3"/>
<line x1="1251.00" y1="444.10" x2="1251.00" y2="457.60" stroke="#8d8d8d" stroke-width="1.2"/>
<rect x="1239.70" y="449.80" width="9.60" height="2.00" fill="#8d8d8d"/>
<rect x="1243.50" y="446.00" width="2.00" height="9.60" fill="#8d8d8d"/>
<rect x="1276.00" y="439.80" width="82.80" height="22.00" fill="#484848" rx="2.5"/>
<text x="1279.50" y="456.80" font-size="14.2" fill="#b9b9b9" stroke="#b9b9b9" stroke-width="0.3" textLength="26.50" lengthAdjust="spacingAndGlyphs">0 dB</text>
<path d="M1344.3,449.1 L1350.7,449.1 L1347.5,445.0 Z" fill="#9a9a9a"/>
<path d="M1344.3,452.1 L1350.7,452.1 L1347.5,456.3 Z" fill="#9a9a9a"/>
<rect x="1219.40" y="498.20" width="9.00" height="8.60" fill="#262626" rx="1.5"/>
<rect x="1237.30" y="495.30" width="27.40" height="14.50" fill="#6c6c6c" rx="2.5"/>
<rect x="1238.10" y="496.10" width="13.30" height="12.90" fill="#f2f2f2" rx="2"/>
<rect x="1252.10" y="496.10" width="11.80" height="12.90" fill="#1e1e1e" rx="1.5"/>
<rect x="1239.80" y="501.40" width="10.00" height="2.20" fill="#111"/>
<rect x="1243.70" y="497.50" width="2.20" height="10.00" fill="#111"/>
<rect x="1276.00" y="491.50" width="82.80" height="22.00" fill="#1d1d1d" rx="2.5"/>
<text x="1279.50" y="508.50" font-size="14.2" fill="#f0f0f0" stroke="#f0f0f0" stroke-width="0.3" textLength="26.50" lengthAdjust="spacingAndGlyphs">0 dB</text>
<path d="M1344.3,500.8 L1350.7,500.8 L1347.5,496.7 Z" fill="#8a8a8a"/>
<path d="M1344.3,503.8 L1350.7,503.8 L1347.5,508.0 Z" fill="#f0f0f0"/>
<path d="M1371.5,191.4 L1422.6,191.4 L1422.6,502.5 L1371.5,502.5" fill="none" stroke="#9a9a9a" stroke-width="1.6"/>
<rect x="1388.50" y="311.00" width="67.30" height="22.00" fill="#b3303f" rx="1" stroke="#1c1c1c" stroke-width="1.6"/>
<text x="1422.20" y="327.60" font-size="13.5" fill="#f6e6e8" stroke="#f6e6e8" stroke-width="0.3" textLength="42.00" lengthAdjust="spacingAndGlyphs" text-anchor="middle">6.0 dB</text>
<line x1="1216.00" y1="539.00" x2="1485.60" y2="539.00" stroke="#9c9c9c" stroke-width="1.5"/>
<text x="1216.00" y="559.80" font-size="12.6" fill="#adadad" stroke="#adadad" stroke-width="0.3" textLength="113.00" lengthAdjust="spacingAndGlyphs">PRE-EQ LEVEL TRIM</text>
<rect x="1216.80" y="586.60" width="92.20" height="22.00" fill="#1d1d1d" rx="2.5"/>
<text x="1220.50" y="603.50" font-size="14.2" fill="#f0f0f0" stroke="#f0f0f0" stroke-width="0.3" textLength="26.50" lengthAdjust="spacingAndGlyphs">0 dB</text>
<path d="M1295.1,595.9 L1301.5,595.9 L1298.3,591.8000000000001 Z" fill="#8a8a8a"/>
<path d="M1295.1,598.9 L1301.5,598.9 L1298.3,603.1 Z" fill="#f0f0f0"/>
<text x="1486.40" y="89.40" font-size="13.1" fill="#a9a9a9" stroke="#a9a9a9" stroke-width="0.3" textLength="83.00" lengthAdjust="spacingAndGlyphs">TO EQUALIZER</text>
<rect x="1579.00" y="72.30" width="73.00" height="22.20" fill="#1d1d1d" rx="3"/>
<text x="1583.50" y="89.00" font-size="13" fill="#f0f0f0" stroke="#f0f0f0" stroke-width="0.3">1</text>
<path d="M1639.2,80.7 L1646.6,80.7 L1642.9,85.2 Z" fill="#f0f0f0"/>
<rect x="1537.00" y="135.20" width="9.00" height="8.60" fill="#262626" rx="1.5"/>
<rect x="1554.90" y="132.30" width="27.40" height="14.50" fill="#6c6c6c" rx="2.5"/>
<rect x="1555.70" y="133.10" width="13.30" height="12.90" fill="#f2f2f2" rx="2"/>
<rect x="1569.70" y="133.10" width="11.80" height="12.90" fill="#1e1e1e" rx="1.5"/>
<rect x="1557.40" y="138.40" width="10.00" height="2.20" fill="#111"/>
<rect x="1561.30" y="134.50" width="2.20" height="10.00" fill="#111"/>
<rect x="1593.60" y="128.50" width="82.80" height="22.00" fill="#1d1d1d" rx="2.5"/>
<text x="1597.10" y="145.50" font-size="14.2" fill="#f0f0f0" stroke="#f0f0f0" stroke-width="0.3" textLength="26.50" lengthAdjust="spacingAndGlyphs">0 dB</text>
<path d="M1661.8999999999999,137.8 L1668.3,137.8 L1665.1,133.7 Z" fill="#8a8a8a"/>
<path d="M1661.8999999999999,140.8 L1668.3,140.8 L1665.1,145.0 Z" fill="#f0f0f0"/>
<rect x="1537.00" y="187.10" width="9.00" height="8.60" fill="#3d3d3d" rx="1.5"/>
<rect x="1555.40" y="184.70" width="26.40" height="13.50" fill="#4d4d4d" rx="2.5" stroke="#8d8d8d" stroke-width="1.3"/>
<line x1="1568.60" y1="184.70" x2="1568.60" y2="198.20" stroke="#8d8d8d" stroke-width="1.2"/>
<rect x="1557.30" y="190.40" width="9.60" height="2.00" fill="#8d8d8d"/>
<rect x="1561.10" y="186.60" width="2.00" height="9.60" fill="#8d8d8d"/>
<rect x="1593.60" y="180.40" width="82.80" height="22.00" fill="#484848" rx="2.5"/>
<text x="1597.10" y="197.40" font-size="14.2" fill="#b9b9b9" stroke="#b9b9b9" stroke-width="0.3" textLength="26.50" lengthAdjust="spacingAndGlyphs">0 dB</text>
<path d="M1661.8999999999999,189.70000000000002 L1668.3,189.70000000000002 L1665.1,185.6 Z" fill="#9a9a9a"/>
<path d="M1661.8999999999999,192.70000000000002 L1668.3,192.70000000000002 L1665.1,196.9 Z" fill="#9a9a9a"/>
<rect x="1537.00" y="239.00" width="9.00" height="8.60" fill="#3d3d3d" rx="1.5"/>
<rect x="1555.40" y="236.60" width="26.40" height="13.50" fill="#4d4d4d" rx="2.5" stroke="#8d8d8d" stroke-width="1.3"/>
<line x1="1568.60" y1="236.60" x2="1568.60" y2="250.10" stroke="#8d8d8d" stroke-width="1.2"/>
<rect x="1557.30" y="242.30" width="9.60" height="2.00" fill="#8d8d8d"/>
<rect x="1561.10" y="238.50" width="2.00" height="9.60" fill="#8d8d8d"/>
<rect x="1593.60" y="232.30" width="82.80" height="22.00" fill="#484848" rx="2.5"/>
<text x="1597.10" y="249.30" font-size="14.2" fill="#b9b9b9" stroke="#b9b9b9" stroke-width="0.3" textLength="26.50" lengthAdjust="spacingAndGlyphs">0 dB</text>
<path d="M1661.8999999999999,241.60000000000002 L1668.3,241.60000000000002 L1665.1,237.5 Z" fill="#9a9a9a"/>
<path d="M1661.8999999999999,244.60000000000002 L1668.3,244.60000000000002 L1665.1,248.8 Z" fill="#9a9a9a"/>
<rect x="1537.00" y="291.20" width="9.00" height="8.60" fill="#3d3d3d" rx="1.5"/>
<rect x="1555.40" y="288.80" width="26.40" height="13.50" fill="#4d4d4d" rx="2.5" stroke="#8d8d8d" stroke-width="1.3"/>
<line x1="1568.60" y1="288.80" x2="1568.60" y2="302.30" stroke="#8d8d8d" stroke-width="1.2"/>
<rect x="1557.30" y="294.50" width="9.60" height="2.00" fill="#8d8d8d"/>
<rect x="1561.10" y="290.70" width="2.00" height="9.60" fill="#8d8d8d"/>
<rect x="1593.60" y="284.50" width="82.80" height="22.00" fill="#484848" rx="2.5"/>
<text x="1597.10" y="301.50" font-size="14.2" fill="#b9b9b9" stroke="#b9b9b9" stroke-width="0.3" textLength="26.50" lengthAdjust="spacingAndGlyphs">0 dB</text>
<path d="M1661.8999999999999,293.8 L1668.3,293.8 L1665.1,289.7 Z" fill="#9a9a9a"/>
<path d="M1661.8999999999999,296.8 L1668.3,296.8 L1665.1,301.0 Z" fill="#9a9a9a"/>
<rect x="1537.00" y="343.20" width="9.00" height="8.60" fill="#3d3d3d" rx="1.5"/>
<rect x="1555.40" y="340.80" width="26.40" height="13.50" fill="#4d4d4d" rx="2.5" stroke="#8d8d8d" stroke-width="1.3"/>
<line x1="1568.60" y1="340.80" x2="1568.60" y2="354.30" stroke="#8d8d8d" stroke-width="1.2"/>
<rect x="1557.30" y="346.50" width="9.60" height="2.00" fill="#8d8d8d"/>
<rect x="1561.10" y="342.70" width="2.00" height="9.60" fill="#8d8d8d"/>
<rect x="1593.60" y="336.50" width="82.80" height="22.00" fill="#484848" rx="2.5"/>
<text x="1597.10" y="353.50" font-size="14.2" fill="#b9b9b9" stroke="#b9b9b9" stroke-width="0.3" textLength="26.50" lengthAdjust="spacingAndGlyphs">0 dB</text>
<path d="M1661.8999999999999,345.8 L1668.3,345.8 L1665.1,341.7 Z" fill="#9a9a9a"/>
<path d="M1661.8999999999999,348.8 L1668.3,348.8 L1665.1,353.0 Z" fill="#9a9a9a"/>
<rect x="1537.00" y="394.90" width="9.00" height="8.60" fill="#3d3d3d" rx="1.5"/>
<rect x="1555.40" y="392.50" width="26.40" height="13.50" fill="#4d4d4d" rx="2.5" stroke="#8d8d8d" stroke-width="1.3"/>
<line x1="1568.60" y1="392.50" x2="1568.60" y2="406.00" stroke="#8d8d8d" stroke-width="1.2"/>
<rect x="1557.30" y="398.20" width="9.60" height="2.00" fill="#8d8d8d"/>
<rect x="1561.10" y="394.40" width="2.00" height="9.60" fill="#8d8d8d"/>
<rect x="1593.60" y="388.20" width="82.80" height="22.00" fill="#484848" rx="2.5"/>
<text x="1597.10" y="405.20" font-size="14.2" fill="#b9b9b9" stroke="#b9b9b9" stroke-width="0.3" textLength="26.50" lengthAdjust="spacingAndGlyphs">0 dB</text>
<path d="M1661.8999999999999,397.5 L1668.3,397.5 L1665.1,393.4 Z" fill="#9a9a9a"/>
<path d="M1661.8999999999999,400.5 L1668.3,400.5 L1665.1,404.7 Z" fill="#9a9a9a"/>
<rect x="1537.00" y="446.50" width="9.00" height="8.60" fill="#262626" rx="1.5"/>
<rect x="1554.90" y="443.60" width="27.40" height="14.50" fill="#6c6c6c" rx="2.5"/>
<rect x="1555.70" y="444.40" width="13.30" height="12.90" fill="#f2f2f2" rx="2"/>
<rect x="1569.70" y="444.40" width="11.80" height="12.90" fill="#1e1e1e" rx="1.5"/>
<rect x="1557.40" y="449.70" width="10.00" height="2.20" fill="#111"/>
<rect x="1561.30" y="445.80" width="2.20" height="10.00" fill="#111"/>
<rect x="1593.60" y="439.80" width="82.80" height="22.00" fill="#1d1d1d" rx="2.5"/>
<text x="1597.10" y="456.80" font-size="14.2" fill="#f0f0f0" stroke="#f0f0f0" stroke-width="0.3" textLength="26.50" lengthAdjust="spacingAndGlyphs">0 dB</text>
<path d="M1661.8999999999999,449.1 L1668.3,449.1 L1665.1,445.0 Z" fill="#8a8a8a"/>
<path d="M1661.8999999999999,452.1 L1668.3,452.1 L1665.1,456.3 Z" fill="#f0f0f0"/>
<rect x="1537.00" y="498.20" width="9.00" height="8.60" fill="#3d3d3d" rx="1.5"/>
<rect x="1555.40" y="495.80" width="26.40" height="13.50" fill="#4d4d4d" rx="2.5" stroke="#8d8d8d" stroke-width="1.3"/>
<line x1="1568.60" y1="495.80" x2="1568.60" y2="509.30" stroke="#8d8d8d" stroke-width="1.2"/>
<rect x="1557.30" y="501.50" width="9.60" height="2.00" fill="#8d8d8d"/>
<rect x="1561.10" y="497.70" width="2.00" height="9.60" fill="#8d8d8d"/>
<rect x="1593.60" y="491.50" width="82.80" height="22.00" fill="#484848" rx="2.5"/>
<text x="1597.10" y="508.50" font-size="14.2" fill="#b9b9b9" stroke="#b9b9b9" stroke-width="0.3" textLength="26.50" lengthAdjust="spacingAndGlyphs">0 dB</text>
<path d="M1661.8999999999999,500.8 L1668.3,500.8 L1665.1,496.7 Z" fill="#9a9a9a"/>
<path d="M1661.8999999999999,503.8 L1668.3,503.8 L1665.1,508.0 Z" fill="#9a9a9a"/>
<path d="M1689.1,139.5 L1740.1999999999998,139.5 L1740.1999999999998,450.8 L1689.1,450.8" fill="none" stroke="#9a9a9a" stroke-width="1.6"/>
<rect x="1706.10" y="311.00" width="67.30" height="22.00" fill="#b3303f" rx="1" stroke="#1c1c1c" stroke-width="1.6"/>
<text x="1739.80" y="327.60" font-size="13.5" fill="#f6e6e8" stroke="#f6e6e8" stroke-width="0.3" textLength="42.00" lengthAdjust="spacingAndGlyphs" text-anchor="middle">6.0 dB</text>
<line x1="1533.60" y1="539.00" x2="1803.20" y2="539.00" stroke="#9c9c9c" stroke-width="1.5"/>
<text x="1533.60" y="559.80" font-size="12.6" fill="#adadad" stroke="#adadad" stroke-width="0.3" textLength="113.00" lengthAdjust="spacingAndGlyphs">PRE-EQ LEVEL TRIM</text>
<rect x="1534.40" y="586.60" width="92.20" height="22.00" fill="#1d1d1d" rx="2.5"/>
<text x="1538.10" y="603.50" font-size="14.2" fill="#f0f0f0" stroke="#f0f0f0" stroke-width="0.3" textLength="26.50" lengthAdjust="spacingAndGlyphs">0 dB</text>
<path d="M1612.7,595.9 L1619.1000000000001,595.9 L1615.9,591.8000000000001 Z" fill="#8a8a8a"/>
<path d="M1612.7,598.9 L1619.1000000000001,598.9 L1615.9,603.1 Z" fill="#f0f0f0"/>
<rect x="1315.70" y="588.00" width="46.10" height="18.40" fill="#0f1a0a"/>
<rect x="1316.20" y="588.70" width="3.61" height="17.00" fill="#26bb22"/>
<rect x="1320.81" y="588.70" width="3.61" height="17.00" fill="#26bb22"/>
<rect x="1325.42" y="588.70" width="3.61" height="17.00" fill="#26bb22"/>
<rect x="1330.03" y="588.70" width="3.61" height="17.00" fill="#26bb22"/>
<rect x="1334.64" y="588.70" width="3.61" height="17.00" fill="#f5d22e"/>
<rect x="1339.25" y="588.70" width="3.61" height="17.00" fill="#f5d22e"/>
<rect x="1343.86" y="588.70" width="3.61" height="17.00" fill="#f5d22e"/>
<rect x="1348.32" y="588.70" width="3.91" height="17.00" fill="#e01414"/>
<rect x="1352.93" y="588.70" width="3.91" height="17.00" fill="#e01414"/>
<rect x="1357.54" y="588.70" width="3.91" height="17.00" fill="#e01414"/>
<rect x="1633.30" y="588.00" width="46.10" height="18.40" fill="#0f1a0a"/>
<rect x="1633.80" y="588.70" width="3.61" height="17.00" fill="#26bb22"/>
<rect x="1638.41" y="588.70" width="3.61" height="17.00" fill="#26bb22"/>
<rect x="1643.02" y="588.70" width="3.61" height="17.00" fill="#26bb22"/>
<rect x="1647.63" y="588.70" width="3.61" height="17.00" fill="#26bb22"/>
<rect x="1652.24" y="588.70" width="3.61" height="17.00" fill="#f5d22e"/>
<rect x="1656.85" y="588.70" width="3.61" height="17.00" fill="#f5d22e"/>
<rect x="1661.46" y="588.70" width="3.61" height="17.00" fill="#f5d22e"/>
<rect x="1665.92" y="588.70" width="3.91" height="17.00" fill="#e01414"/>
<rect x="1670.53" y="588.70" width="3.91" height="17.00" fill="#e01414"/>
<rect x="1675.14" y="588.70" width="3.91" height="17.00" fill="#e01414"/>
<text x="108.75" y="693.00" font-size="14.8" fill="#f0f0f0" stroke="#f0f0f0" stroke-width="0.3" textLength="76.30" lengthAdjust="spacingAndGlyphs">EQUALIZERS</text>
<rect x="400.20" y="681.60" width="18.60" height="19.20" fill="none" rx="3" stroke="#a3a3a3" stroke-width="1.9"/>
<rect x="440.20" y="681.60" width="18.60" height="19.20" fill="none" rx="3" stroke="#a3a3a3" stroke-width="1.9"/>
<rect x="501.20" y="681.60" width="18.60" height="19.20" fill="none" rx="3" stroke="#a3a3a3" stroke-width="1.9"/>
<rect x="541.20" y="681.60" width="18.60" height="19.20" fill="none" rx="3" stroke="#a3a3a3" stroke-width="1.9"/>
<rect x="422.70" y="670.10" width="13.60" height="5.40" fill="none" rx="2.7" stroke="#7c7c7c" stroke-width="1.5"/>
<line x1="426.50" y1="672.80" x2="432.50" y2="672.80" stroke="#7c7c7c" stroke-width="1.5"/>
<rect x="523.70" y="670.10" width="13.60" height="5.40" fill="none" rx="2.7" stroke="#7c7c7c" stroke-width="1.5"/>
<line x1="527.50" y1="672.80" x2="533.50" y2="672.80" stroke="#7c7c7c" stroke-width="1.5"/>
<rect x="623.50" y="670.10" width="13.60" height="5.40" fill="none" rx="2.7" stroke="#e98a2a" stroke-width="1.5"/>
<line x1="627.30" y1="672.80" x2="633.30" y2="672.80" stroke="#e98a2a" stroke-width="1.5"/>
<rect x="723.70" y="670.10" width="13.60" height="5.40" fill="none" rx="2.7" stroke="#e98a2a" stroke-width="1.5"/>
<line x1="727.50" y1="672.80" x2="733.50" y2="672.80" stroke="#e98a2a" stroke-width="1.5"/>
<rect x="600.70" y="681.30" width="18.60" height="19.80" fill="#f7901e" rx="2.5"/>
<text x="610.00" y="696.50" font-size="14" fill="#fff4e8" stroke="#fff4e8" stroke-width="0.3" text-anchor="middle">4</text>
<rect x="641.20" y="681.30" width="18.60" height="19.80" fill="#f7901e" rx="2.5"/>
<text x="650.50" y="696.50" font-size="14" fill="#fff4e8" stroke="#fff4e8" stroke-width="0.3" text-anchor="middle">3</text>
<rect x="702.20" y="681.30" width="18.60" height="19.80" fill="#f7901e" rx="2.5"/>
<text x="711.50" y="696.50" font-size="14" fill="#fff4e8" stroke="#fff4e8" stroke-width="0.3" text-anchor="middle">2</text>
<rect x="742.20" y="681.30" width="18.60" height="19.80" fill="#f7901e" rx="2.5"/>
<text x="751.50" y="696.50" font-size="14" fill="#fff4e8" stroke="#fff4e8" stroke-width="0.3" text-anchor="middle">1</text>
<text x="108.75" y="762.80" font-size="14.8" fill="#f0f0f0" stroke="#f0f0f0" stroke-width="0.3" textLength="50.50" lengthAdjust="spacingAndGlyphs">ROUTER</text>
<text x="1277.70" y="763.30" font-size="14.5" fill="#f0f0f0" stroke="#f0f0f0" stroke-width="0.3" textLength="84.80" lengthAdjust="spacingAndGlyphs" text-anchor="middle">CROSSOVERS</text>
<rect x="1265.60" y="835.50" width="17.40" height="17.20" fill="#f7901e" rx="2.5" stroke="#3b2614" stroke-width="0.8"/>
<rect x="1265.60" y="869.90" width="17.40" height="17.20" fill="#f7901e" rx="2.5" stroke="#3b2614" stroke-width="0.8"/>
<rect x="1265.60" y="938.90" width="17.40" height="17.20" fill="#f7901e" rx="2.5" stroke="#3b2614" stroke-width="0.8"/>
<rect x="1265.60" y="973.30" width="17.40" height="17.20" fill="#f7901e" rx="2.5" stroke="#3b2614" stroke-width="0.8"/>
<rect x="1265.60" y="1042.10" width="17.40" height="17.20" fill="#f7901e" rx="2.5" stroke="#3b2614" stroke-width="0.8"/>
<rect x="1265.60" y="1076.80" width="17.40" height="17.20" fill="#f7901e" rx="2.5" stroke="#3b2614" stroke-width="0.8"/>
<rect x="1265.60" y="1145.50" width="17.40" height="17.20" fill="#f7901e" rx="2.5" stroke="#3b2614" stroke-width="0.8"/>
<rect x="1265.60" y="1180.00" width="17.40" height="17.20" fill="#f7901e" rx="2.5" stroke="#3b2614" stroke-width="0.8"/>
<text x="1411.50" y="763.30" font-size="14.5" fill="#f0f0f0" stroke="#f0f0f0" stroke-width="0.3" textLength="69.50" lengthAdjust="spacingAndGlyphs">DRC SETUP</text>
<rect x="1492.00" y="753.70" width="12.00" height="2.20" fill="#f0f0f0"/>
<rect x="1492.00" y="757.25" width="12.00" height="2.20" fill="#f0f0f0"/>
<rect x="1492.00" y="760.80" width="12.00" height="2.20" fill="#f0f0f0"/>
<path d="M1393.02,812.36 A10.6,10.6 0 0 1 1394.37,793.04" fill="none" stroke="#9d9d9d" stroke-width="2.3"/>
<path d="M1401.63,793.04 A10.6,10.6 0 0 1 1402.98,812.36" fill="none" stroke="#9d9d9d" stroke-width="2.3"/>
<circle cx="1398.00" cy="803.00" r="5.60" fill="#f0902a"/>
<path d="M1450.52,812.36 A10.6,10.6 0 0 1 1451.87,793.04" fill="none" stroke="#f0902a" stroke-width="2.3"/>
<path d="M1459.13,793.04 A10.6,10.6 0 0 1 1460.48,812.36" fill="none" stroke="#9d9d9d" stroke-width="2.3"/>
<circle cx="1455.50" cy="803.00" r="5.60" fill="#9aa0a2"/>
<path d="M1508.32,812.36 A10.6,10.6 0 0 1 1509.67,793.04" fill="none" stroke="#9d9d9d" stroke-width="2.3"/>
<path d="M1516.93,793.04 A10.6,10.6 0 0 1 1518.28,812.36" fill="none" stroke="#f0902a" stroke-width="2.3"/>
<circle cx="1513.30" cy="803.00" r="5.60" fill="#9aa0a2"/>
<rect x="1387.60" y="836.80" width="14.40" height="14.40" fill="#1b1b1b" rx="2.5" stroke="#858585" stroke-width="1.5"/>
<path d="M1390.8999999999999,843.6 L1394.2,846.3 L1398.8999999999999,840.7" fill="none" stroke="#f2f2f2" stroke-width="2.3"/>
<rect x="1445.00" y="836.80" width="14.40" height="14.40" fill="#1b1b1b" rx="2.5" stroke="#858585" stroke-width="1.5"/>
<path d="M1448.3,843.6 L1451.6000000000001,846.3 L1456.3,840.7" fill="none" stroke="#f2f2f2" stroke-width="2.3"/>
<rect x="1502.80" y="836.80" width="14.40" height="14.40" fill="#1b1b1b" rx="2.5" stroke="#858585" stroke-width="1.5"/>
<rect x="1387.60" y="871.20" width="14.40" height="14.40" fill="#1b1b1b" rx="2.5" stroke="#858585" stroke-width="1.5"/>
<path d="M1390.8999999999999,878.0 L1394.2,880.6999999999999 L1398.8999999999999,875.1" fill="none" stroke="#f2f2f2" stroke-width="2.3"/>
<rect x="1445.00" y="871.20" width="14.40" height="14.40" fill="#1b1b1b" rx="2.5" stroke="#858585" stroke-width="1.5"/>
<path d="M1448.3,878.0 L1451.6000000000001,880.6999999999999 L1456.3,875.1" fill="none" stroke="#f2f2f2" stroke-width="2.3"/>
<rect x="1502.80" y="871.20" width="14.40" height="14.40" fill="#1b1b1b" rx="2.5" stroke="#858585" stroke-width="1.5"/>
<rect x="1387.60" y="940.20" width="14.40" height="14.40" fill="#1b1b1b" rx="2.5" stroke="#858585" stroke-width="1.5"/>
<path d="M1390.8999999999999,947.0 L1394.2,949.6999999999999 L1398.8999999999999,944.1" fill="none" stroke="#f2f2f2" stroke-width="2.3"/>
<rect x="1445.00" y="940.20" width="14.40" height="14.40" fill="#1b1b1b" rx="2.5" stroke="#858585" stroke-width="1.5"/>
<path d="M1448.3,947.0 L1451.6000000000001,949.6999999999999 L1456.3,944.1" fill="none" stroke="#f2f2f2" stroke-width="2.3"/>
<rect x="1502.80" y="940.20" width="14.40" height="14.40" fill="#1b1b1b" rx="2.5" stroke="#858585" stroke-width="1.5"/>
<rect x="1387.60" y="974.60" width="14.40" height="14.40" fill="#1b1b1b" rx="2.5" stroke="#858585" stroke-width="1.5"/>
<path d="M1390.8999999999999,981.4 L1394.2,984.0999999999999 L1398.8999999999999,978.5" fill="none" stroke="#f2f2f2" stroke-width="2.3"/>
<rect x="1445.00" y="974.60" width="14.40" height="14.40" fill="#1b1b1b" rx="2.5" stroke="#858585" stroke-width="1.5"/>
<path d="M1448.3,981.4 L1451.6000000000001,984.0999999999999 L1456.3,978.5" fill="none" stroke="#f2f2f2" stroke-width="2.3"/>
<rect x="1502.80" y="974.60" width="14.40" height="14.40" fill="#1b1b1b" rx="2.5" stroke="#858585" stroke-width="1.5"/>
<rect x="1387.60" y="1043.40" width="14.40" height="14.40" fill="#1b1b1b" rx="2.5" stroke="#858585" stroke-width="1.5"/>
<path d="M1390.8999999999999,1050.1999999999998 L1394.2,1052.8999999999999 L1398.8999999999999,1047.3" fill="none" stroke="#f2f2f2" stroke-width="2.3"/>
<rect x="1445.00" y="1043.40" width="14.40" height="14.40" fill="#1b1b1b" rx="2.5" stroke="#858585" stroke-width="1.5"/>
<rect x="1502.80" y="1043.40" width="14.40" height="14.40" fill="#1b1b1b" rx="2.5" stroke="#858585" stroke-width="1.5"/>
<path d="M1506.1,1050.1999999999998 L1509.4,1052.8999999999999 L1514.1,1047.3" fill="none" stroke="#f2f2f2" stroke-width="2.3"/>
<rect x="1387.60" y="1078.10" width="14.40" height="14.40" fill="#1b1b1b" rx="2.5" stroke="#858585" stroke-width="1.5"/>
<path d="M1390.8999999999999,1084.8999999999999 L1394.2,1087.6 L1398.8999999999999,1082.0" fill="none" stroke="#f2f2f2" stroke-width="2.3"/>
<rect x="1445.00" y="1078.10" width="14.40" height="14.40" fill="#1b1b1b" rx="2.5" stroke="#858585" stroke-width="1.5"/>
<rect x="1502.80" y="1078.10" width="14.40" height="14.40" fill="#1b1b1b" rx="2.5" stroke="#858585" stroke-width="1.5"/>
<path d="M1506.1,1084.8999999999999 L1509.4,1087.6 L1514.1,1082.0" fill="none" stroke="#f2f2f2" stroke-width="2.3"/>
<rect x="1387.60" y="1146.80" width="14.40" height="14.40" fill="#1b1b1b" rx="2.5" stroke="#858585" stroke-width="1.5"/>
<path d="M1390.8999999999999,1153.6 L1394.2,1156.3 L1398.8999999999999,1150.7" fill="none" stroke="#f2f2f2" stroke-width="2.3"/>
<rect x="1445.00" y="1146.80" width="14.40" height="14.40" fill="#1b1b1b" rx="2.5" stroke="#858585" stroke-width="1.5"/>
<path d="M1448.3,1153.6 L1451.6000000000001,1156.3 L1456.3,1150.7" fill="none" stroke="#f2f2f2" stroke-width="2.3"/>
<rect x="1502.80" y="1146.80" width="14.40" height="14.40" fill="#1b1b1b" rx="2.5" stroke="#858585" stroke-width="1.5"/>
<rect x="1387.60" y="1181.30" width="14.40" height="14.40" fill="#1b1b1b" rx="2.5" stroke="#858585" stroke-width="1.5"/>
<path d="M1390.8999999999999,1188.1 L1394.2,1190.8 L1398.8999999999999,1185.2" fill="none" stroke="#f2f2f2" stroke-width="2.3"/>
<rect x="1445.00" y="1181.30" width="14.40" height="14.40" fill="#1b1b1b" rx="2.5" stroke="#858585" stroke-width="1.5"/>
<path d="M1448.3,1188.1 L1451.6000000000001,1190.8 L1456.3,1185.2" fill="none" stroke="#f2f2f2" stroke-width="2.3"/>
<rect x="1502.80" y="1181.30" width="14.40" height="14.40" fill="#1b1b1b" rx="2.5" stroke="#858585" stroke-width="1.5"/>
<text x="1577.20" y="763.30" font-size="14.5" fill="#f0f0f0" stroke="#f0f0f0" stroke-width="0.3" textLength="60.60" lengthAdjust="spacingAndGlyphs">OUTPUTS</text>
<rect x="1650.00" y="753.70" width="11.50" height="2.20" fill="#f0f0f0"/>
<rect x="1650.00" y="757.25" width="11.50" height="2.20" fill="#f0f0f0"/>
<rect x="1650.00" y="760.80" width="11.50" height="2.20" fill="#f0f0f0"/>
<circle cx="1600.40" cy="844.50" r="9.70" fill="#1b1b1b" stroke="#c68150" stroke-width="1.8"/>
<text x="1600.40" y="849.70" font-size="14" fill="#f4f4f4" stroke="#f4f4f4" stroke-width="0.3" text-anchor="middle">A</text>
<rect x="1617.60" y="829.90" width="203.00" height="29.20" fill="#1d1d1d" rx="3" stroke="#141414" stroke-width="1"/>
<text x="1621.50" y="850.50" font-size="14.3" fill="#ececec" stroke="#ececec" stroke-width="0.3" textLength="109.50" lengthAdjust="spacingAndGlyphs">Front Left Tweeter</text>
<circle cx="1600.40" cy="879.00" r="9.70" fill="#1b1b1b" stroke="#c68150" stroke-width="1.8"/>
<text x="1600.40" y="884.20" font-size="14" fill="#f4f4f4" stroke="#f4f4f4" stroke-width="0.3" text-anchor="middle">B</text>
<rect x="1617.60" y="864.40" width="203.00" height="29.20" fill="#1d1d1d" rx="3" stroke="#141414" stroke-width="1"/>
<text x="1621.50" y="885.00" font-size="14.3" fill="#ececec" stroke="#ececec" stroke-width="0.3" textLength="119.10" lengthAdjust="spacingAndGlyphs">Front Right Tweeter</text>
<circle cx="1600.40" cy="947.50" r="9.70" fill="#1b1b1b" stroke="#c68150" stroke-width="1.8"/>
<text x="1600.40" y="952.70" font-size="14" fill="#f4f4f4" stroke="#f4f4f4" stroke-width="0.3" text-anchor="middle">C</text>
<rect x="1617.60" y="932.90" width="203.00" height="29.20" fill="#1d1d1d" rx="3" stroke="#141414" stroke-width="1"/>
<text x="1621.50" y="953.50" font-size="14.3" fill="#ececec" stroke="#ececec" stroke-width="0.3" textLength="120.90" lengthAdjust="spacingAndGlyphs">Front Left Midrange</text>
<circle cx="1600.40" cy="982.00" r="9.70" fill="#1b1b1b" stroke="#c68150" stroke-width="1.8"/>
<text x="1600.40" y="987.20" font-size="14" fill="#f4f4f4" stroke="#f4f4f4" stroke-width="0.3" text-anchor="middle">D</text>
<rect x="1617.60" y="967.40" width="203.00" height="29.20" fill="#1d1d1d" rx="3" stroke="#141414" stroke-width="1"/>
<text x="1621.50" y="988.00" font-size="14.3" fill="#ececec" stroke="#ececec" stroke-width="0.3" textLength="129.90" lengthAdjust="spacingAndGlyphs">Front Right Midrange</text>
<circle cx="1600.40" cy="1050.50" r="9.70" fill="#1b1b1b" stroke="#c68150" stroke-width="1.8"/>
<text x="1600.40" y="1055.70" font-size="14" fill="#f4f4f4" stroke="#f4f4f4" stroke-width="0.3" text-anchor="middle">E</text>
<rect x="1617.60" y="1035.90" width="203.00" height="29.20" fill="#1d1d1d" rx="3" stroke="#141414" stroke-width="1"/>
<text x="1621.50" y="1056.50" font-size="14.3" fill="#ececec" stroke="#ececec" stroke-width="0.3" textLength="106.30" lengthAdjust="spacingAndGlyphs">Rear Left Channel</text>
<circle cx="1600.40" cy="1085.00" r="9.70" fill="#1b1b1b" stroke="#c68150" stroke-width="1.8"/>
<text x="1600.40" y="1090.20" font-size="14" fill="#f4f4f4" stroke="#f4f4f4" stroke-width="0.3" text-anchor="middle">F</text>
<rect x="1617.60" y="1070.40" width="203.00" height="29.20" fill="#1d1d1d" rx="3" stroke="#141414" stroke-width="1"/>
<text x="1621.50" y="1091.00" font-size="14.3" fill="#ececec" stroke="#ececec" stroke-width="0.3" textLength="115.40" lengthAdjust="spacingAndGlyphs">Rear Right Channel</text>
<circle cx="1600.40" cy="1154.00" r="9.70" fill="#1b1b1b" stroke="#c68150" stroke-width="1.8"/>
<text x="1600.40" y="1159.20" font-size="14" fill="#f4f4f4" stroke="#f4f4f4" stroke-width="0.3" text-anchor="middle">G</text>
<rect x="1617.60" y="1139.40" width="203.00" height="29.20" fill="#1d1d1d" rx="3" stroke="#141414" stroke-width="1"/>
<text x="1621.50" y="1160.00" font-size="14.3" fill="#ececec" stroke="#ececec" stroke-width="0.3" textLength="91.20" lengthAdjust="spacingAndGlyphs">Subwoofer Left</text>
<circle cx="1600.40" cy="1188.50" r="9.70" fill="#1b1b1b" stroke="#c68150" stroke-width="1.8"/>
<text x="1600.40" y="1193.70" font-size="14" fill="#f4f4f4" stroke="#f4f4f4" stroke-width="0.3" text-anchor="middle">H</text>
<rect x="1617.60" y="1173.90" width="203.00" height="29.20" fill="#1d1d1d" rx="3" stroke="#141414" stroke-width="1"/>
<text x="1621.50" y="1194.50" font-size="14.3" fill="#ececec" stroke="#ececec" stroke-width="0.3" textLength="100.60" lengthAdjust="spacingAndGlyphs">Subwoofer Right</text>
<rect x="1895.00" y="220.60" width="75.50" height="20.60" fill="#262a2b" rx="1.5" stroke="#2f8a3d" stroke-width="1.6"/>
<text x="1932.70" y="235.80" font-size="13.5" fill="#3fa04a" stroke="#3fa04a" stroke-width="0.4" textLength="44.00" lengthAdjust="spacingAndGlyphs" text-anchor="middle">TwK 88</text>
<rect x="1895.00" y="245.80" width="75.50" height="20.60" fill="#262a2b" rx="1.5" stroke="#2f8a3d" stroke-width="1.6"/>
<text x="1932.70" y="261.00" font-size="13.5" fill="#3fa04a" stroke="#3fa04a" stroke-width="0.4" textLength="52.00" lengthAdjust="spacingAndGlyphs" text-anchor="middle">DRC 200</text>
<path d="M1895.33,409.50 A12.4,12.4 0 1 1 1911.27,409.50" fill="none" stroke="#9ea2a2" stroke-width="2.6"/>
<circle cx="1903.30" cy="400.00" r="6.90" fill="#f7901e"/>
<path d="M1952.83,409.50 A12.4,12.4 0 1 1 1968.77,409.50" fill="none" stroke="#f0922e" stroke-width="2.6"/>
<circle cx="1960.80" cy="400.00" r="6.30" fill="#a8aaac"/>
<rect x="1898.70" y="429.30" width="9.20" height="191.00" fill="#3c3f40" rx="4.6"/>
<rect x="1900.00" y="430.60" width="6.60" height="188.40" fill="#050505" rx="3.3"/>
<rect x="1900.90" y="489.00" width="4.80" height="128.00" fill="#f7901e" rx="2.4"/>
<defs><linearGradient id="hg1903" x1="0" y1="0" x2="0" y2="1"><stop offset="0" stop-color="#fafafa"/><stop offset="0.55" stop-color="#e4e4e4"/><stop offset="1" stop-color="#a9a9a9"/></linearGradient></defs>
<rect x="1896.30" y="470.00" width="14.00" height="26.20" fill="url(#hg1903)" rx="3.5"/>
<rect x="1956.10" y="429.30" width="9.20" height="191.00" fill="#3c3f40" rx="4.6"/>
<rect x="1957.40" y="430.60" width="6.60" height="188.40" fill="#050505" rx="3.3"/>
<rect x="1958.30" y="530.00" width="4.80" height="87.00" fill="#f7901e" rx="2.4"/>
<defs><linearGradient id="hg1960" x1="0" y1="0" x2="0" y2="1"><stop offset="0" stop-color="#fafafa"/><stop offset="0.55" stop-color="#e4e4e4"/><stop offset="1" stop-color="#a9a9a9"/></linearGradient></defs>
<rect x="1953.70" y="511.00" width="14.00" height="26.20" fill="url(#hg1960)" rx="3.5"/>
<rect x="1923.60" y="523.80" width="16.80" height="1.80" fill="#8c8c8c"/>
<line x1="1871.00" y1="740.50" x2="1899.70" y2="740.50" stroke="#8a8a8a" stroke-width="1.6"/>
<line x1="1961.80" y1="740.50" x2="1991.00" y2="740.50" stroke="#8a8a8a" stroke-width="1.6"/>
<circle cx="1931.10" cy="740.80" r="14.50" fill="#161818"/>
<circle cx="1931.10" cy="740.80" r="13.90" fill="#e2e2e2"/>
<path d="M1923.45,739.01 L1927.33,739.01 L1930.70,735.04 L1930.70,746.56 L1927.33,742.69 L1923.45,742.69 Z" fill="#141414"/>
<path d="M1933.09,738.12 Q1937.06,740.80 1933.09,743.48 Z" fill="#141414"/>
<path d="M1933.38,733.55 C1940.63,734.84 1940.63,746.96 1933.38,748.25" fill="none" stroke="#141414" stroke-width="1.7871428571428571"/>
<circle cx="1870.00" cy="843.70" r="11.60" fill="#161818"/>
<circle cx="1870.00" cy="843.70" r="11.00" fill="#e2e2e2"/>
<path d="M1863.95,842.29 L1867.01,842.29 L1869.69,839.14 L1869.69,848.26 L1867.01,845.19 L1863.95,845.19 Z" fill="#141414"/>
<path d="M1871.57,841.58 Q1874.71,843.70 1871.57,845.82 Z" fill="#141414"/>
<path d="M1871.81,837.96 C1877.54,838.99 1877.54,848.57 1871.81,849.59" fill="none" stroke="#141414" stroke-width="1.4142857142857144"/>
<text x="1923.30" y="849.90" font-size="14.2" fill="#f0f0f0" stroke="#f0f0f0" stroke-width="0.6" text-anchor="middle">A</text>
<rect x="1931.20" y="833.90" width="46.10" height="18.20" fill="#0f1a0a"/>
<rect x="1931.70" y="834.60" width="3.61" height="16.80" fill="#26bb22"/>
<rect x="1936.31" y="834.60" width="3.61" height="16.80" fill="#26bb22"/>
<rect x="1940.92" y="834.60" width="3.61" height="16.80" fill="#26bb22"/>
<rect x="1945.53" y="834.60" width="3.61" height="16.80" fill="#26bb22"/>
<rect x="1950.14" y="834.60" width="3.61" height="16.80" fill="#f5d22e"/>
<rect x="1954.75" y="834.60" width="3.61" height="16.80" fill="#f5d22e"/>
<rect x="1959.36" y="834.60" width="3.61" height="16.80" fill="#f5d22e"/>
<rect x="1963.82" y="834.60" width="3.91" height="16.80" fill="#e01414"/>
<rect x="1968.43" y="834.60" width="3.91" height="16.80" fill="#e01414"/>
<rect x="1973.04" y="834.60" width="3.91" height="16.80" fill="#e01414"/>
<circle cx="1870.00" cy="878.20" r="11.60" fill="#161818"/>
<circle cx="1870.00" cy="878.20" r="11.00" fill="#e2e2e2"/>
<path d="M1863.95,876.79 L1867.01,876.79 L1869.69,873.64 L1869.69,882.76 L1867.01,879.69 L1863.95,879.69 Z" fill="#141414"/>
<path d="M1871.57,876.08 Q1874.71,878.20 1871.57,880.32 Z" fill="#141414"/>
<path d="M1871.81,872.46 C1877.54,873.49 1877.54,883.07 1871.81,884.09" fill="none" stroke="#141414" stroke-width="1.4142857142857144"/>
<text x="1923.30" y="884.40" font-size="14.2" fill="#f0f0f0" stroke="#f0f0f0" stroke-width="0.6" text-anchor="middle">B</text>
<rect x="1931.20" y="868.40" width="46.10" height="18.20" fill="#0f1a0a"/>
<rect x="1931.70" y="869.10" width="3.61" height="16.80" fill="#26bb22"/>
<rect x="1936.31" y="869.10" width="3.61" height="16.80" fill="#26bb22"/>
<rect x="1940.92" y="869.10" width="3.61" height="16.80" fill="#26bb22"/>
<rect x="1945.53" y="869.10" width="3.61" height="16.80" fill="#26bb22"/>
<rect x="1950.14" y="869.10" width="3.61" height="16.80" fill="#f5d22e"/>
<rect x="1954.75" y="869.10" width="3.61" height="16.80" fill="#f5d22e"/>
<rect x="1959.36" y="869.10" width="3.61" height="16.80" fill="#f5d22e"/>
<rect x="1963.82" y="869.10" width="3.91" height="16.80" fill="#e01414"/>
<rect x="1968.43" y="869.10" width="3.91" height="16.80" fill="#e01414"/>
<rect x="1973.04" y="869.10" width="3.91" height="16.80" fill="#e01414"/>
<circle cx="1870.00" cy="946.70" r="11.60" fill="#161818"/>
<circle cx="1870.00" cy="946.70" r="11.00" fill="#e2e2e2"/>
<path d="M1863.95,945.29 L1867.01,945.29 L1869.69,942.14 L1869.69,951.26 L1867.01,948.19 L1863.95,948.19 Z" fill="#141414"/>
<path d="M1871.57,944.58 Q1874.71,946.70 1871.57,948.82 Z" fill="#141414"/>
<path d="M1871.81,940.96 C1877.54,941.99 1877.54,951.57 1871.81,952.59" fill="none" stroke="#141414" stroke-width="1.4142857142857144"/>
<text x="1923.30" y="952.90" font-size="14.2" fill="#f0f0f0" stroke="#f0f0f0" stroke-width="0.6" text-anchor="middle">C</text>
<rect x="1931.20" y="936.90" width="46.10" height="18.20" fill="#0f1a0a"/>
<rect x="1931.70" y="937.60" width="3.61" height="16.80" fill="#26bb22"/>
<rect x="1936.31" y="937.60" width="3.61" height="16.80" fill="#26bb22"/>
<rect x="1940.92" y="937.60" width="3.61" height="16.80" fill="#26bb22"/>
<rect x="1945.53" y="937.60" width="3.61" height="16.80" fill="#26bb22"/>
<rect x="1950.14" y="937.60" width="3.61" height="16.80" fill="#f5d22e"/>
<rect x="1954.75" y="937.60" width="3.61" height="16.80" fill="#f5d22e"/>
<rect x="1959.36" y="937.60" width="3.61" height="16.80" fill="#f5d22e"/>
<rect x="1963.82" y="937.60" width="3.91" height="16.80" fill="#e01414"/>
<rect x="1968.43" y="937.60" width="3.91" height="16.80" fill="#e01414"/>
<rect x="1973.04" y="937.60" width="3.91" height="16.80" fill="#e01414"/>
<circle cx="1870.00" cy="981.20" r="11.60" fill="#161818"/>
<circle cx="1870.00" cy="981.20" r="11.00" fill="#e2e2e2"/>
<path d="M1863.95,979.79 L1867.01,979.79 L1869.69,976.64 L1869.69,985.76 L1867.01,982.69 L1863.95,982.69 Z" fill="#141414"/>
<path d="M1871.57,979.08 Q1874.71,981.20 1871.57,983.32 Z" fill="#141414"/>
<path d="M1871.81,975.46 C1877.54,976.49 1877.54,986.07 1871.81,987.09" fill="none" stroke="#141414" stroke-width="1.4142857142857144"/>
<text x="1923.30" y="987.40" font-size="14.2" fill="#f0f0f0" stroke="#f0f0f0" stroke-width="0.6" text-anchor="middle">D</text>
<rect x="1931.20" y="971.40" width="46.10" height="18.20" fill="#0f1a0a"/>
<rect x="1931.70" y="972.10" width="3.61" height="16.80" fill="#26bb22"/>
<rect x="1936.31" y="972.10" width="3.61" height="16.80" fill="#26bb22"/>
<rect x="1940.92" y="972.10" width="3.61" height="16.80" fill="#26bb22"/>
<rect x="1945.53" y="972.10" width="3.61" height="16.80" fill="#26bb22"/>
<rect x="1950.14" y="972.10" width="3.61" height="16.80" fill="#f5d22e"/>
<rect x="1954.75" y="972.10" width="3.61" height="16.80" fill="#f5d22e"/>
<rect x="1959.36" y="972.10" width="3.61" height="16.80" fill="#f5d22e"/>
<rect x="1963.82" y="972.10" width="3.91" height="16.80" fill="#e01414"/>
<rect x="1968.43" y="972.10" width="3.91" height="16.80" fill="#e01414"/>
<rect x="1973.04" y="972.10" width="3.91" height="16.80" fill="#e01414"/>
<circle cx="1870.00" cy="1049.70" r="11.60" fill="#161818"/>
<circle cx="1870.00" cy="1049.70" r="11.00" fill="#e2e2e2"/>
<path d="M1863.95,1048.29 L1867.01,1048.29 L1869.69,1045.14 L1869.69,1054.26 L1867.01,1051.19 L1863.95,1051.19 Z" fill="#141414"/>
<path d="M1871.57,1047.58 Q1874.71,1049.70 1871.57,1051.82 Z" fill="#141414"/>
<path d="M1871.81,1043.96 C1877.54,1044.99 1877.54,1054.57 1871.81,1055.59" fill="none" stroke="#141414" stroke-width="1.4142857142857144"/>
<text x="1923.30" y="1055.90" font-size="14.2" fill="#f0f0f0" stroke="#f0f0f0" stroke-width="0.6" text-anchor="middle">E</text>
<rect x="1931.20" y="1039.90" width="46.10" height="18.20" fill="#0f1a0a"/>
<rect x="1931.70" y="1040.60" width="3.61" height="16.80" fill="#26bb22"/>
<rect x="1936.31" y="1040.60" width="3.61" height="16.80" fill="#26bb22"/>
<rect x="1940.92" y="1040.60" width="3.61" height="16.80" fill="#26bb22"/>
<rect x="1945.53" y="1040.60" width="3.61" height="16.80" fill="#26bb22"/>
<rect x="1950.14" y="1040.60" width="3.61" height="16.80" fill="#f5d22e"/>
<rect x="1954.75" y="1040.60" width="3.61" height="16.80" fill="#f5d22e"/>
<rect x="1959.36" y="1040.60" width="3.61" height="16.80" fill="#f5d22e"/>
<rect x="1963.82" y="1040.60" width="3.91" height="16.80" fill="#622424"/>
<rect x="1968.43" y="1040.60" width="3.91" height="16.80" fill="#622424"/>
<rect x="1973.04" y="1040.60" width="3.91" height="16.80" fill="#622424"/>
<circle cx="1870.00" cy="1084.20" r="11.60" fill="#161818"/>
<circle cx="1870.00" cy="1084.20" r="11.00" fill="#e2e2e2"/>
<path d="M1863.95,1082.79 L1867.01,1082.79 L1869.69,1079.64 L1869.69,1088.76 L1867.01,1085.69 L1863.95,1085.69 Z" fill="#141414"/>
<path d="M1871.57,1082.08 Q1874.71,1084.20 1871.57,1086.32 Z" fill="#141414"/>
<path d="M1871.81,1078.46 C1877.54,1079.49 1877.54,1089.07 1871.81,1090.09" fill="none" stroke="#141414" stroke-width="1.4142857142857144"/>
<text x="1923.30" y="1090.40" font-size="14.2" fill="#f0f0f0" stroke="#f0f0f0" stroke-width="0.6" text-anchor="middle">F</text>
<rect x="1931.20" y="1074.40" width="46.10" height="18.20" fill="#0f1a0a"/>
<rect x="1931.70" y="1075.10" width="3.61" height="16.80" fill="#26bb22"/>
<rect x="1936.31" y="1075.10" width="3.61" height="16.80" fill="#26bb22"/>
<rect x="1940.92" y="1075.10" width="3.61" height="16.80" fill="#26bb22"/>
<rect x="1945.53" y="1075.10" width="3.61" height="16.80" fill="#26bb22"/>
<rect x="1950.14" y="1075.10" width="3.61" height="16.80" fill="#f5d22e"/>
<rect x="1954.75" y="1075.10" width="3.61" height="16.80" fill="#f5d22e"/>
<rect x="1959.36" y="1075.10" width="3.61" height="16.80" fill="#7a6d2c"/>
<rect x="1963.82" y="1075.10" width="3.91" height="16.80" fill="#622424"/>
<rect x="1968.43" y="1075.10" width="3.91" height="16.80" fill="#622424"/>
<rect x="1973.04" y="1075.10" width="3.91" height="16.80" fill="#622424"/>
<circle cx="1870.00" cy="1153.20" r="11.60" fill="#161818"/>
<circle cx="1870.00" cy="1153.20" r="11.00" fill="#e2e2e2"/>
<path d="M1863.95,1151.79 L1867.01,1151.79 L1869.69,1148.64 L1869.69,1157.76 L1867.01,1154.69 L1863.95,1154.69 Z" fill="#141414"/>
<path d="M1871.57,1151.08 Q1874.71,1153.20 1871.57,1155.32 Z" fill="#141414"/>
<path d="M1871.81,1147.46 C1877.54,1148.49 1877.54,1158.07 1871.81,1159.09" fill="none" stroke="#141414" stroke-width="1.4142857142857144"/>
<text x="1923.30" y="1159.40" font-size="14.2" fill="#f0f0f0" stroke="#f0f0f0" stroke-width="0.6" text-anchor="middle">G</text>
<rect x="1931.20" y="1143.40" width="46.10" height="18.20" fill="#0f1a0a"/>
<rect x="1931.70" y="1144.10" width="3.61" height="16.80" fill="#26bb22"/>
<rect x="1936.31" y="1144.10" width="3.61" height="16.80" fill="#26bb22"/>
<rect x="1940.92" y="1144.10" width="3.61" height="16.80" fill="#26bb22"/>
<rect x="1945.53" y="1144.10" width="3.61" height="16.80" fill="#26bb22"/>
<rect x="1950.14" y="1144.10" width="3.61" height="16.80" fill="#f5d22e"/>
<rect x="1954.75" y="1144.10" width="3.61" height="16.80" fill="#f5d22e"/>
<rect x="1959.36" y="1144.10" width="3.61" height="16.80" fill="#f5d22e"/>
<rect x="1963.82" y="1144.10" width="3.91" height="16.80" fill="#e01414"/>
<rect x="1968.43" y="1144.10" width="3.91" height="16.80" fill="#e01414"/>
<rect x="1973.04" y="1144.10" width="3.91" height="16.80" fill="#e01414"/>
<circle cx="1870.00" cy="1187.70" r="11.60" fill="#161818"/>
<circle cx="1870.00" cy="1187.70" r="11.00" fill="#e2e2e2"/>
<path d="M1863.95,1186.29 L1867.01,1186.29 L1869.69,1183.14 L1869.69,1192.26 L1867.01,1189.19 L1863.95,1189.19 Z" fill="#141414"/>
<path d="M1871.57,1185.58 Q1874.71,1187.70 1871.57,1189.82 Z" fill="#141414"/>
<path d="M1871.81,1181.96 C1877.54,1182.99 1877.54,1192.57 1871.81,1193.59" fill="none" stroke="#141414" stroke-width="1.4142857142857144"/>
<text x="1923.30" y="1193.90" font-size="14.2" fill="#f0f0f0" stroke="#f0f0f0" stroke-width="0.6" text-anchor="middle">H</text>
<rect x="1931.20" y="1177.90" width="46.10" height="18.20" fill="#0f1a0a"/>
<rect x="1931.70" y="1178.60" width="3.61" height="16.80" fill="#26bb22"/>
<rect x="1936.31" y="1178.60" width="3.61" height="16.80" fill="#26bb22"/>
<rect x="1940.92" y="1178.60" width="3.61" height="16.80" fill="#26bb22"/>
<rect x="1945.53" y="1178.60" width="3.61" height="16.80" fill="#26bb22"/>
<rect x="1950.14" y="1178.60" width="3.61" height="16.80" fill="#f5d22e"/>
<rect x="1954.75" y="1178.60" width="3.61" height="16.80" fill="#f5d22e"/>
<rect x="1959.36" y="1178.60" width="3.61" height="16.80" fill="#f5d22e"/>
<rect x="1963.82" y="1178.60" width="3.91" height="16.80" fill="#e01414"/>
<rect x="1968.43" y="1178.60" width="3.91" height="16.80" fill="#e01414"/>
<rect x="1973.04" y="1178.60" width="3.91" height="16.80" fill="#e01414"/>
<circle cx="61.50" cy="465.50" r="11.40" fill="#c6c6c6"/>
<circle cx="61.50" cy="504.40" r="11.40" fill="#c6c6c6"/>
<circle cx="61.50" cy="543.80" r="11.40" fill="#c6c6c6"/>
<circle cx="61.50" cy="582.60" r="11.40" fill="#c6c6c6"/>
<circle cx="61.50" cy="621.50" r="11.40" fill="#c6c6c6"/>
<circle cx="61.50" cy="660.50" r="11.40" fill="#c6c6c6"/>
<circle cx="61.50" cy="699.50" r="11.40" fill="#c6c6c6"/>
<rect x="54.50" y="464.40" width="14.00" height="2.20" fill="#262a2b"/>
<rect x="60.40" y="458.50" width="2.20" height="14.00" fill="#262a2b"/>
<path d="M56.0,505.4 L56.0,509.9 L67.0,509.9 L67.0,505.4" fill="none" stroke="#262a2b" stroke-width="2"/>
<path d="M61.5,507.4 L61.5,499.4" fill="none" stroke="#262a2b" stroke-width="2"/>
<path d="M57.7,502.2 L61.5,497.9 L65.3,502.2 Z" fill="#262a2b"/>
<path d="M56.0,544.8 L56.0,549.3 L67.0,549.3 L67.0,544.8" fill="none" stroke="#262a2b" stroke-width="2"/>
<path d="M61.5,537.3 L61.5,544.8" fill="none" stroke="#262a2b" stroke-width="2"/>
<path d="M57.7,542.3 L61.5,546.8 L65.3,542.3 Z" fill="#262a2b"/>
<rect x="55.00" y="579.10" width="10.00" height="10.00" fill="#262a2b"/>
<path d="M58.0,577.1 L67.0,577.1 L67.0,586.6" fill="none" stroke="#262a2b" stroke-width="2"/>
<path d="M57.9,618.1999999999999 L65.1,625.4" fill="none" stroke="#262a2b" stroke-width="2.2"/>
<path d="M56.30,613.70 A2.9,2.9 0 1 1 53.40,616.60" fill="none" stroke="#262a2b" stroke-width="2.0"/>
<path d="M66.70,629.90 A2.9,2.9 0 1 1 69.60,627.00" fill="none" stroke="#262a2b" stroke-width="2.0"/>
<path d="M55.67,658.38 A6.2,6.2 0 1 1 56.75,664.49" fill="none" stroke="#262a2b" stroke-width="2.2"/>
<path d="M52.5,659.5 L58.5,659.5 L55.5,664.5 Z" fill="#262a2b"/>
<rect x="54.90" y="693.90" width="2.20" height="2.00" fill="#262a2b"/>
<rect x="58.90" y="694.00" width="9.40" height="1.80" fill="#262a2b"/>
<rect x="54.90" y="698.50" width="2.20" height="2.00" fill="#262a2b"/>
<rect x="58.90" y="698.60" width="9.40" height="1.80" fill="#262a2b"/>
<rect x="54.90" y="703.10" width="2.20" height="2.00" fill="#262a2b"/>
<rect x="58.90" y="703.20" width="9.40" height="1.80" fill="#262a2b"/>
<rect x="50.50" y="734.00" width="23.00" height="1.60" fill="#8a8a8a"/>
<circle cx="61.50" cy="1117.40" r="11.40" fill="#c6c6c6"/>
<circle cx="61.50" cy="1156.40" r="11.40" fill="#c6c6c6"/>
<circle cx="61.50" cy="1195.40" r="11.40" fill="#c6c6c6"/>
<g transform="translate(61.5,1117.4)"><rect x="-1.3" y="-7.2" width="2.6" height="4" fill="#262a2b" transform="rotate(0)"/><rect x="-1.3" y="-7.2" width="2.6" height="4" fill="#262a2b" transform="rotate(45)"/><rect x="-1.3" y="-7.2" width="2.6" height="4" fill="#262a2b" transform="rotate(90)"/><rect x="-1.3" y="-7.2" width="2.6" height="4" fill="#262a2b" transform="rotate(135)"/><rect x="-1.3" y="-7.2" width="2.6" height="4" fill="#262a2b" transform="rotate(180)"/><rect x="-1.3" y="-7.2" width="2.6" height="4" fill="#262a2b" transform="rotate(225)"/><rect x="-1.3" y="-7.2" width="2.6" height="4" fill="#262a2b" transform="rotate(270)"/><rect x="-1.3" y="-7.2" width="2.6" height="4" fill="#262a2b" transform="rotate(315)"/></g>
<circle cx="61.50" cy="1117.40" r="4.20" fill="#262a2b"/>
<circle cx="61.50" cy="1117.40" r="1.80" fill="#c6c6c6"/>
<circle cx="61.50" cy="1156.40" r="8.20" fill="none" stroke="#262a2b" stroke-width="1.4"/>
<path d="M64.95,1159.29 A4.5,4.5 0 1 1 64.95,1153.51" fill="none" stroke="#262a2b" stroke-width="2"/>
<text x="61.50" y="1200.60" font-size="14.5" fill="#262a2b" text-anchor="middle" font-weight="bold">?</text>
</svg>
</body></html>
